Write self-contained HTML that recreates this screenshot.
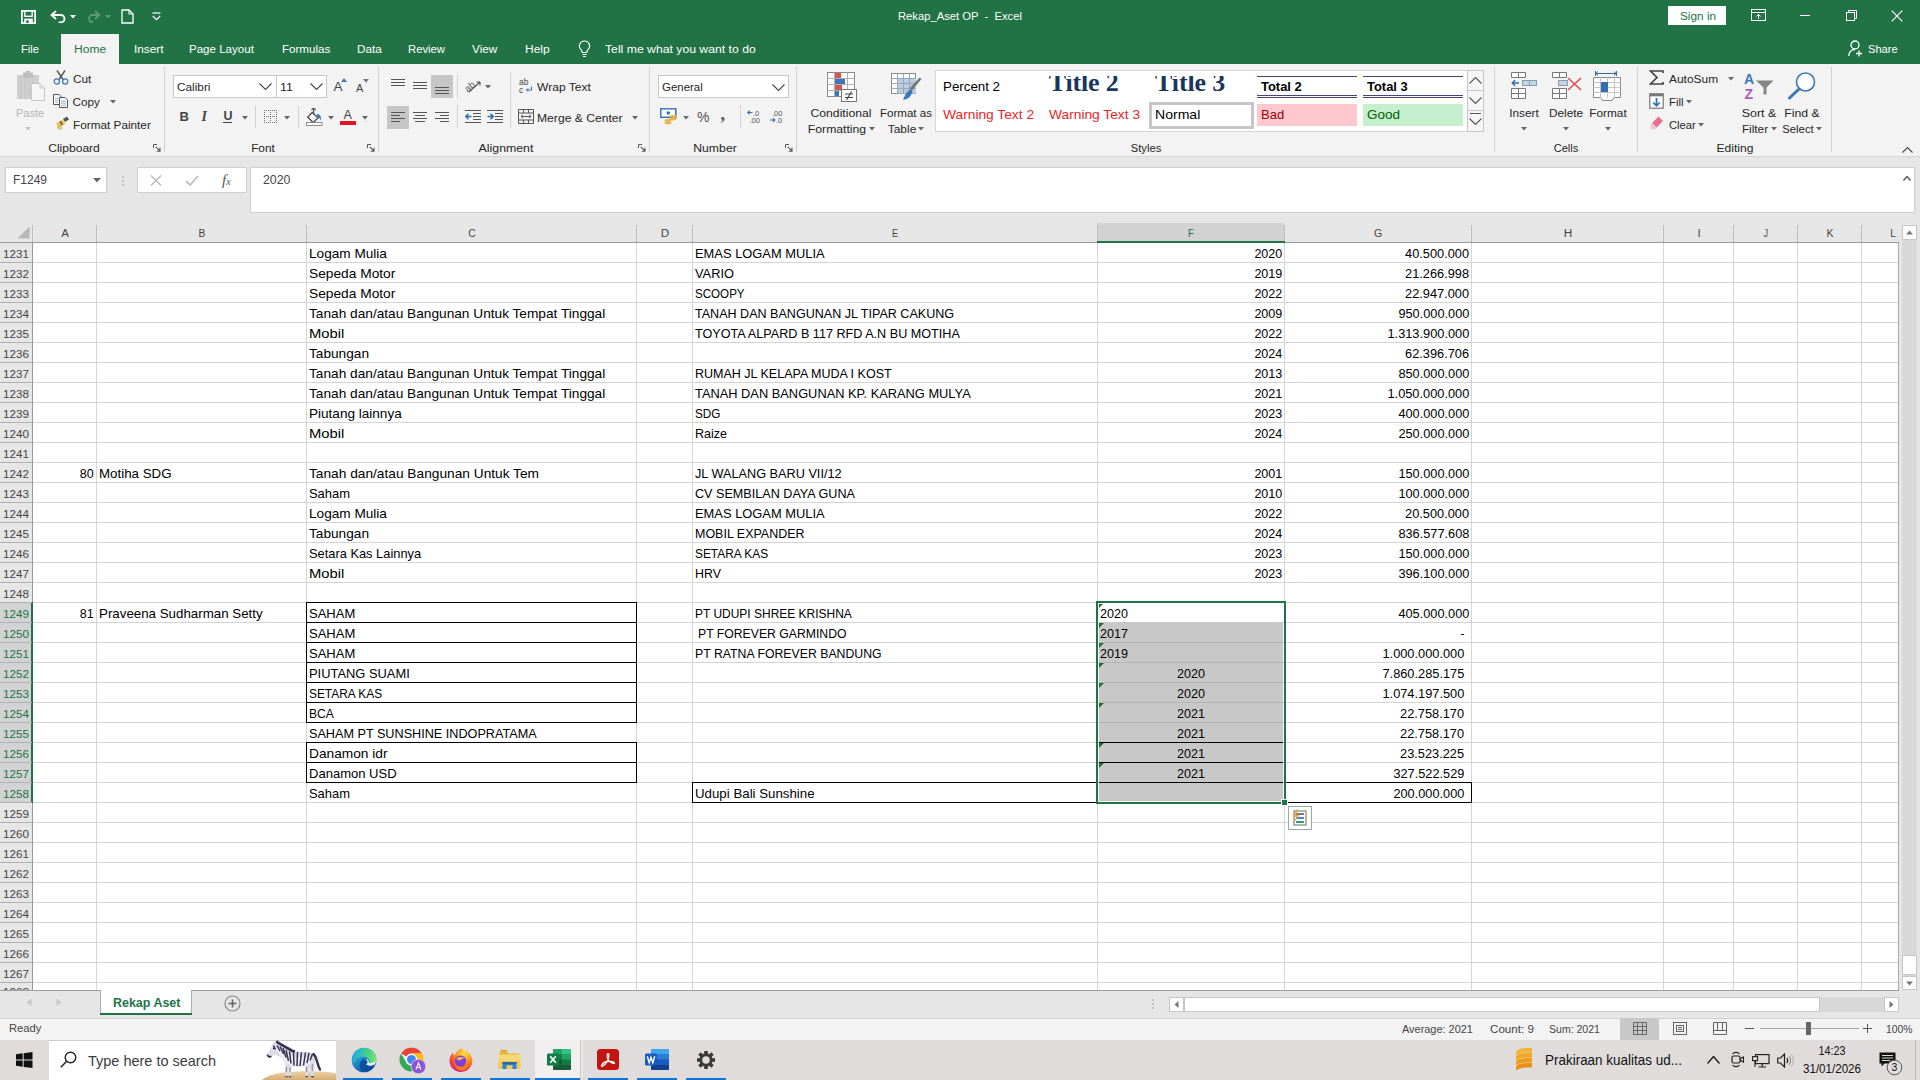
<!DOCTYPE html>
<html><head><meta charset="utf-8"><title>Rekap_Aset OP - Excel</title>
<style>
html,body{margin:0;padding:0;}
body{width:1920px;height:1080px;overflow:hidden;position:relative;background:#fff;font-family:"Liberation Sans",sans-serif;}
body>div,body>span,body>svg{position:absolute;}
.t{white-space:pre;display:block;}
</style></head><body>
<div style="left:0px;top:0px;width:1920px;height:64px;background:#217346;"></div>
<div style="left:0px;top:64px;width:1920px;height:93px;background:#f3f3f3;"></div>
<div style="left:0px;top:156px;width:1920px;height:1px;background:#d6d6d6;"></div>
<div style="left:0px;top:157px;width:1920px;height:66px;background:#e6e6e6;"></div>
<div style="left:0px;top:223px;width:1920px;height:767px;background:#e6e6e6;"></div>
<div style="left:33px;top:243px;width:1866px;height:747px;background:#fff;"></div>
<div style="left:0px;top:990px;width:1920px;height:29px;background:#e6e6e6;"></div>
<div style="left:0px;top:1019px;width:1920px;height:21px;background:#f3f3f3;"></div>
<div style="left:0px;top:1040px;width:1920px;height:40px;background:#e0dcdb;"></div>
<div style="left:1097px;top:223px;width:187px;height:19px;background:#d2d2d2;"></div>
<div style="left:32px;top:225px;width:1px;height:17px;background:#bdbdbd;"></div>
<div style="left:96px;top:225px;width:1px;height:17px;background:#bdbdbd;"></div>
<div style="left:306px;top:225px;width:1px;height:17px;background:#bdbdbd;"></div>
<div style="left:636px;top:225px;width:1px;height:17px;background:#bdbdbd;"></div>
<div style="left:692px;top:225px;width:1px;height:17px;background:#bdbdbd;"></div>
<div style="left:1097px;top:225px;width:1px;height:17px;background:#bdbdbd;"></div>
<div style="left:1284px;top:225px;width:1px;height:17px;background:#bdbdbd;"></div>
<div style="left:1471px;top:225px;width:1px;height:17px;background:#bdbdbd;"></div>
<div style="left:1663px;top:225px;width:1px;height:17px;background:#bdbdbd;"></div>
<div style="left:1733px;top:225px;width:1px;height:17px;background:#bdbdbd;"></div>
<div style="left:1797px;top:225px;width:1px;height:17px;background:#bdbdbd;"></div>
<div style="left:1861px;top:225px;width:1px;height:17px;background:#bdbdbd;"></div>
<div style="left:0px;top:242px;width:1899px;height:1px;background:#9b9b9b;"></div>
<div style="left:1097px;top:241px;width:188px;height:2px;background:#217346;"></div>
<span class="t" style="top:224.9px;font-size:11.7px;line-height:15px;color:#444;font-weight:normal;font-style:normal;left:-435.5px;width:1000px;text-align:center;transform-origin:50% 50%;transform:scaleX(0.992);">A</span>
<span class="t" style="top:224.9px;font-size:11.7px;line-height:15px;color:#444;font-weight:normal;font-style:normal;left:-298.5px;width:1000px;text-align:center;transform-origin:50% 50%;transform:scaleX(0.881);">B</span>
<span class="t" style="top:224.9px;font-size:11.7px;line-height:15px;color:#444;font-weight:normal;font-style:normal;left:-28.5px;width:1000px;text-align:center;transform-origin:50% 50%;transform:scaleX(0.879);">C</span>
<span class="t" style="top:224.9px;font-size:11.7px;line-height:15px;color:#444;font-weight:normal;font-style:normal;left:164.5px;width:1000px;text-align:center;transform-origin:50% 50%;transform:scaleX(0.996);">D</span>
<span class="t" style="top:224.9px;font-size:11.7px;line-height:15px;color:#444;font-weight:normal;font-style:normal;left:395.0px;width:1000px;text-align:center;transform-origin:50% 50%;transform:scaleX(0.778);">E</span>
<span class="t" style="top:224.9px;font-size:11.7px;line-height:15px;color:#217346;font-weight:normal;font-style:normal;left:691.0px;width:1000px;text-align:center;transform-origin:50% 50%;transform:scaleX(0.819);">F</span>
<span class="t" style="top:224.9px;font-size:11.7px;line-height:15px;color:#444;font-weight:normal;font-style:normal;left:878.0px;width:1000px;text-align:center;transform-origin:50% 50%;transform:scaleX(0.905);">G</span>
<span class="t" style="top:224.9px;font-size:11.7px;line-height:15px;color:#444;font-weight:normal;font-style:normal;left:1067.5px;width:1000px;text-align:center;transform-origin:50% 50%;transform:scaleX(1.008);">H</span>
<span class="t" style="top:224.9px;font-size:11.7px;line-height:15px;color:#444;font-weight:normal;font-style:normal;left:1198.5px;width:1000px;text-align:center;transform-origin:50% 50%;transform:scaleX(0.982);">I</span>
<span class="t" style="top:224.9px;font-size:11.7px;line-height:15px;color:#444;font-weight:normal;font-style:normal;left:1265.5px;width:1000px;text-align:center;transform-origin:50% 50%;transform:scaleX(0.732);">J</span>
<span class="t" style="top:224.9px;font-size:11.7px;line-height:15px;color:#444;font-weight:normal;font-style:normal;left:1329.5px;width:1000px;text-align:center;transform-origin:50% 50%;transform:scaleX(0.892);">K</span>
<span class="t" style="top:224.9px;font-size:11.7px;line-height:15px;color:#444;font-weight:normal;font-style:normal;left:1393.0px;width:1000px;text-align:center;transform-origin:50% 50%;transform:scaleX(0.869);">L</span>
<svg style="left:17px;top:226px" width="13" height="13"><path d="M12.5 0.5V12.5H0.5Z" fill="#b7b7b7"/></svg>
<div style="left:0px;top:603px;width:32px;height:200px;background:#d2d2d2;"></div>
<div style="left:32px;top:243px;width:1px;height:747px;background:#9b9b9b;"></div>
<div style="left:31px;top:602px;width:2px;height:201px;background:#217346;"></div>
<div style="left:0px;top:262px;width:32px;height:1px;background:#b1b1b1;"></div>
<div style="left:33px;top:262px;width:1866px;height:1px;background:#d4d4d4;"></div>
<span class="t" style="top:246.0px;font-size:11.7px;line-height:15px;color:#444;font-weight:normal;font-style:normal;left:-484.0px;width:1000px;text-align:center;transform-origin:50% 50%;transform:scaleX(0.994);">1231</span>
<div style="left:0px;top:282px;width:32px;height:1px;background:#b1b1b1;"></div>
<div style="left:33px;top:282px;width:1866px;height:1px;background:#d4d4d4;"></div>
<span class="t" style="top:266.0px;font-size:11.7px;line-height:15px;color:#444;font-weight:normal;font-style:normal;left:-484.0px;width:1000px;text-align:center;transform-origin:50% 50%;transform:scaleX(0.994);">1232</span>
<div style="left:0px;top:302px;width:32px;height:1px;background:#b1b1b1;"></div>
<div style="left:33px;top:302px;width:1866px;height:1px;background:#d4d4d4;"></div>
<span class="t" style="top:286.0px;font-size:11.7px;line-height:15px;color:#444;font-weight:normal;font-style:normal;left:-484.0px;width:1000px;text-align:center;transform-origin:50% 50%;transform:scaleX(0.994);">1233</span>
<div style="left:0px;top:322px;width:32px;height:1px;background:#b1b1b1;"></div>
<div style="left:33px;top:322px;width:1866px;height:1px;background:#d4d4d4;"></div>
<span class="t" style="top:306.0px;font-size:11.7px;line-height:15px;color:#444;font-weight:normal;font-style:normal;left:-484.0px;width:1000px;text-align:center;transform-origin:50% 50%;transform:scaleX(0.994);">1234</span>
<div style="left:0px;top:342px;width:32px;height:1px;background:#b1b1b1;"></div>
<div style="left:33px;top:342px;width:1866px;height:1px;background:#d4d4d4;"></div>
<span class="t" style="top:326.0px;font-size:11.7px;line-height:15px;color:#444;font-weight:normal;font-style:normal;left:-484.0px;width:1000px;text-align:center;transform-origin:50% 50%;transform:scaleX(0.994);">1235</span>
<div style="left:0px;top:362px;width:32px;height:1px;background:#b1b1b1;"></div>
<div style="left:33px;top:362px;width:1866px;height:1px;background:#d4d4d4;"></div>
<span class="t" style="top:346.0px;font-size:11.7px;line-height:15px;color:#444;font-weight:normal;font-style:normal;left:-484.0px;width:1000px;text-align:center;transform-origin:50% 50%;transform:scaleX(0.994);">1236</span>
<div style="left:0px;top:382px;width:32px;height:1px;background:#b1b1b1;"></div>
<div style="left:33px;top:382px;width:1866px;height:1px;background:#d4d4d4;"></div>
<span class="t" style="top:366.0px;font-size:11.7px;line-height:15px;color:#444;font-weight:normal;font-style:normal;left:-484.0px;width:1000px;text-align:center;transform-origin:50% 50%;transform:scaleX(0.994);">1237</span>
<div style="left:0px;top:402px;width:32px;height:1px;background:#b1b1b1;"></div>
<div style="left:33px;top:402px;width:1866px;height:1px;background:#d4d4d4;"></div>
<span class="t" style="top:386.0px;font-size:11.7px;line-height:15px;color:#444;font-weight:normal;font-style:normal;left:-484.0px;width:1000px;text-align:center;transform-origin:50% 50%;transform:scaleX(0.994);">1238</span>
<div style="left:0px;top:422px;width:32px;height:1px;background:#b1b1b1;"></div>
<div style="left:33px;top:422px;width:1866px;height:1px;background:#d4d4d4;"></div>
<span class="t" style="top:406.0px;font-size:11.7px;line-height:15px;color:#444;font-weight:normal;font-style:normal;left:-484.0px;width:1000px;text-align:center;transform-origin:50% 50%;transform:scaleX(0.994);">1239</span>
<div style="left:0px;top:442px;width:32px;height:1px;background:#b1b1b1;"></div>
<div style="left:33px;top:442px;width:1866px;height:1px;background:#d4d4d4;"></div>
<span class="t" style="top:426.0px;font-size:11.7px;line-height:15px;color:#444;font-weight:normal;font-style:normal;left:-484.0px;width:1000px;text-align:center;transform-origin:50% 50%;transform:scaleX(0.994);">1240</span>
<div style="left:0px;top:462px;width:32px;height:1px;background:#b1b1b1;"></div>
<div style="left:33px;top:462px;width:1866px;height:1px;background:#d4d4d4;"></div>
<span class="t" style="top:446.0px;font-size:11.7px;line-height:15px;color:#444;font-weight:normal;font-style:normal;left:-484.0px;width:1000px;text-align:center;transform-origin:50% 50%;transform:scaleX(0.994);">1241</span>
<div style="left:0px;top:482px;width:32px;height:1px;background:#b1b1b1;"></div>
<div style="left:33px;top:482px;width:1866px;height:1px;background:#d4d4d4;"></div>
<span class="t" style="top:466.0px;font-size:11.7px;line-height:15px;color:#444;font-weight:normal;font-style:normal;left:-484.0px;width:1000px;text-align:center;transform-origin:50% 50%;transform:scaleX(0.994);">1242</span>
<div style="left:0px;top:502px;width:32px;height:1px;background:#b1b1b1;"></div>
<div style="left:33px;top:502px;width:1866px;height:1px;background:#d4d4d4;"></div>
<span class="t" style="top:486.0px;font-size:11.7px;line-height:15px;color:#444;font-weight:normal;font-style:normal;left:-484.0px;width:1000px;text-align:center;transform-origin:50% 50%;transform:scaleX(0.994);">1243</span>
<div style="left:0px;top:522px;width:32px;height:1px;background:#b1b1b1;"></div>
<div style="left:33px;top:522px;width:1866px;height:1px;background:#d4d4d4;"></div>
<span class="t" style="top:506.0px;font-size:11.7px;line-height:15px;color:#444;font-weight:normal;font-style:normal;left:-484.0px;width:1000px;text-align:center;transform-origin:50% 50%;transform:scaleX(0.994);">1244</span>
<div style="left:0px;top:542px;width:32px;height:1px;background:#b1b1b1;"></div>
<div style="left:33px;top:542px;width:1866px;height:1px;background:#d4d4d4;"></div>
<span class="t" style="top:526.0px;font-size:11.7px;line-height:15px;color:#444;font-weight:normal;font-style:normal;left:-484.0px;width:1000px;text-align:center;transform-origin:50% 50%;transform:scaleX(0.994);">1245</span>
<div style="left:0px;top:562px;width:32px;height:1px;background:#b1b1b1;"></div>
<div style="left:33px;top:562px;width:1866px;height:1px;background:#d4d4d4;"></div>
<span class="t" style="top:546.0px;font-size:11.7px;line-height:15px;color:#444;font-weight:normal;font-style:normal;left:-484.0px;width:1000px;text-align:center;transform-origin:50% 50%;transform:scaleX(0.994);">1246</span>
<div style="left:0px;top:582px;width:32px;height:1px;background:#b1b1b1;"></div>
<div style="left:33px;top:582px;width:1866px;height:1px;background:#d4d4d4;"></div>
<span class="t" style="top:566.0px;font-size:11.7px;line-height:15px;color:#444;font-weight:normal;font-style:normal;left:-484.0px;width:1000px;text-align:center;transform-origin:50% 50%;transform:scaleX(0.994);">1247</span>
<div style="left:0px;top:602px;width:32px;height:1px;background:#b1b1b1;"></div>
<div style="left:33px;top:602px;width:1866px;height:1px;background:#d4d4d4;"></div>
<span class="t" style="top:586.0px;font-size:11.7px;line-height:15px;color:#444;font-weight:normal;font-style:normal;left:-484.0px;width:1000px;text-align:center;transform-origin:50% 50%;transform:scaleX(0.994);">1248</span>
<div style="left:0px;top:622px;width:32px;height:1px;background:#b1b1b1;"></div>
<div style="left:33px;top:622px;width:1866px;height:1px;background:#d4d4d4;"></div>
<span class="t" style="top:606.0px;font-size:11.7px;line-height:15px;color:#217346;font-weight:normal;font-style:normal;left:-484.0px;width:1000px;text-align:center;transform-origin:50% 50%;transform:scaleX(0.994);">1249</span>
<div style="left:0px;top:642px;width:32px;height:1px;background:#b1b1b1;"></div>
<div style="left:33px;top:642px;width:1866px;height:1px;background:#d4d4d4;"></div>
<span class="t" style="top:626.0px;font-size:11.7px;line-height:15px;color:#217346;font-weight:normal;font-style:normal;left:-484.0px;width:1000px;text-align:center;transform-origin:50% 50%;transform:scaleX(0.994);">1250</span>
<div style="left:0px;top:662px;width:32px;height:1px;background:#b1b1b1;"></div>
<div style="left:33px;top:662px;width:1866px;height:1px;background:#d4d4d4;"></div>
<span class="t" style="top:646.0px;font-size:11.7px;line-height:15px;color:#217346;font-weight:normal;font-style:normal;left:-484.0px;width:1000px;text-align:center;transform-origin:50% 50%;transform:scaleX(0.994);">1251</span>
<div style="left:0px;top:682px;width:32px;height:1px;background:#b1b1b1;"></div>
<div style="left:33px;top:682px;width:1866px;height:1px;background:#d4d4d4;"></div>
<span class="t" style="top:666.0px;font-size:11.7px;line-height:15px;color:#217346;font-weight:normal;font-style:normal;left:-484.0px;width:1000px;text-align:center;transform-origin:50% 50%;transform:scaleX(0.994);">1252</span>
<div style="left:0px;top:702px;width:32px;height:1px;background:#b1b1b1;"></div>
<div style="left:33px;top:702px;width:1866px;height:1px;background:#d4d4d4;"></div>
<span class="t" style="top:686.0px;font-size:11.7px;line-height:15px;color:#217346;font-weight:normal;font-style:normal;left:-484.0px;width:1000px;text-align:center;transform-origin:50% 50%;transform:scaleX(0.994);">1253</span>
<div style="left:0px;top:722px;width:32px;height:1px;background:#b1b1b1;"></div>
<div style="left:33px;top:722px;width:1866px;height:1px;background:#d4d4d4;"></div>
<span class="t" style="top:706.0px;font-size:11.7px;line-height:15px;color:#217346;font-weight:normal;font-style:normal;left:-484.0px;width:1000px;text-align:center;transform-origin:50% 50%;transform:scaleX(0.994);">1254</span>
<div style="left:0px;top:742px;width:32px;height:1px;background:#b1b1b1;"></div>
<div style="left:33px;top:742px;width:1866px;height:1px;background:#d4d4d4;"></div>
<span class="t" style="top:726.0px;font-size:11.7px;line-height:15px;color:#217346;font-weight:normal;font-style:normal;left:-484.0px;width:1000px;text-align:center;transform-origin:50% 50%;transform:scaleX(0.994);">1255</span>
<div style="left:0px;top:762px;width:32px;height:1px;background:#b1b1b1;"></div>
<div style="left:33px;top:762px;width:1866px;height:1px;background:#d4d4d4;"></div>
<span class="t" style="top:746.0px;font-size:11.7px;line-height:15px;color:#217346;font-weight:normal;font-style:normal;left:-484.0px;width:1000px;text-align:center;transform-origin:50% 50%;transform:scaleX(0.994);">1256</span>
<div style="left:0px;top:782px;width:32px;height:1px;background:#b1b1b1;"></div>
<div style="left:33px;top:782px;width:1866px;height:1px;background:#d4d4d4;"></div>
<span class="t" style="top:766.0px;font-size:11.7px;line-height:15px;color:#217346;font-weight:normal;font-style:normal;left:-484.0px;width:1000px;text-align:center;transform-origin:50% 50%;transform:scaleX(0.994);">1257</span>
<div style="left:0px;top:802px;width:32px;height:1px;background:#b1b1b1;"></div>
<div style="left:33px;top:802px;width:1866px;height:1px;background:#d4d4d4;"></div>
<span class="t" style="top:786.0px;font-size:11.7px;line-height:15px;color:#217346;font-weight:normal;font-style:normal;left:-484.0px;width:1000px;text-align:center;transform-origin:50% 50%;transform:scaleX(0.994);">1258</span>
<div style="left:0px;top:822px;width:32px;height:1px;background:#b1b1b1;"></div>
<div style="left:33px;top:822px;width:1866px;height:1px;background:#d4d4d4;"></div>
<span class="t" style="top:806.0px;font-size:11.7px;line-height:15px;color:#444;font-weight:normal;font-style:normal;left:-484.0px;width:1000px;text-align:center;transform-origin:50% 50%;transform:scaleX(0.994);">1259</span>
<div style="left:0px;top:842px;width:32px;height:1px;background:#b1b1b1;"></div>
<div style="left:33px;top:842px;width:1866px;height:1px;background:#d4d4d4;"></div>
<span class="t" style="top:826.0px;font-size:11.7px;line-height:15px;color:#444;font-weight:normal;font-style:normal;left:-484.0px;width:1000px;text-align:center;transform-origin:50% 50%;transform:scaleX(0.994);">1260</span>
<div style="left:0px;top:862px;width:32px;height:1px;background:#b1b1b1;"></div>
<div style="left:33px;top:862px;width:1866px;height:1px;background:#d4d4d4;"></div>
<span class="t" style="top:846.0px;font-size:11.7px;line-height:15px;color:#444;font-weight:normal;font-style:normal;left:-484.0px;width:1000px;text-align:center;transform-origin:50% 50%;transform:scaleX(0.994);">1261</span>
<div style="left:0px;top:882px;width:32px;height:1px;background:#b1b1b1;"></div>
<div style="left:33px;top:882px;width:1866px;height:1px;background:#d4d4d4;"></div>
<span class="t" style="top:866.0px;font-size:11.7px;line-height:15px;color:#444;font-weight:normal;font-style:normal;left:-484.0px;width:1000px;text-align:center;transform-origin:50% 50%;transform:scaleX(0.994);">1262</span>
<div style="left:0px;top:902px;width:32px;height:1px;background:#b1b1b1;"></div>
<div style="left:33px;top:902px;width:1866px;height:1px;background:#d4d4d4;"></div>
<span class="t" style="top:886.0px;font-size:11.7px;line-height:15px;color:#444;font-weight:normal;font-style:normal;left:-484.0px;width:1000px;text-align:center;transform-origin:50% 50%;transform:scaleX(0.994);">1263</span>
<div style="left:0px;top:922px;width:32px;height:1px;background:#b1b1b1;"></div>
<div style="left:33px;top:922px;width:1866px;height:1px;background:#d4d4d4;"></div>
<span class="t" style="top:906.0px;font-size:11.7px;line-height:15px;color:#444;font-weight:normal;font-style:normal;left:-484.0px;width:1000px;text-align:center;transform-origin:50% 50%;transform:scaleX(0.994);">1264</span>
<div style="left:0px;top:942px;width:32px;height:1px;background:#b1b1b1;"></div>
<div style="left:33px;top:942px;width:1866px;height:1px;background:#d4d4d4;"></div>
<span class="t" style="top:926.0px;font-size:11.7px;line-height:15px;color:#444;font-weight:normal;font-style:normal;left:-484.0px;width:1000px;text-align:center;transform-origin:50% 50%;transform:scaleX(0.994);">1265</span>
<div style="left:0px;top:962px;width:32px;height:1px;background:#b1b1b1;"></div>
<div style="left:33px;top:962px;width:1866px;height:1px;background:#d4d4d4;"></div>
<span class="t" style="top:946.0px;font-size:11.7px;line-height:15px;color:#444;font-weight:normal;font-style:normal;left:-484.0px;width:1000px;text-align:center;transform-origin:50% 50%;transform:scaleX(0.994);">1266</span>
<div style="left:0px;top:982px;width:32px;height:1px;background:#b1b1b1;"></div>
<div style="left:33px;top:982px;width:1866px;height:1px;background:#d4d4d4;"></div>
<span class="t" style="top:966.0px;font-size:11.7px;line-height:15px;color:#444;font-weight:normal;font-style:normal;left:-484.0px;width:1000px;text-align:center;transform-origin:50% 50%;transform:scaleX(0.994);">1267</span>
<div style="left:0;top:983px;width:32px;height:7px;overflow:hidden"><span class="t" style="position:absolute;left:3px;top:1px;font-size:11.7px;line-height:15px;color:#444">1268</span></div>
<div style="left:96px;top:243px;width:1px;height:747px;background:#d4d4d4;"></div>
<div style="left:306px;top:243px;width:1px;height:747px;background:#d4d4d4;"></div>
<div style="left:636px;top:243px;width:1px;height:747px;background:#d4d4d4;"></div>
<div style="left:692px;top:243px;width:1px;height:747px;background:#d4d4d4;"></div>
<div style="left:1097px;top:243px;width:1px;height:747px;background:#d4d4d4;"></div>
<div style="left:1284px;top:243px;width:1px;height:747px;background:#d4d4d4;"></div>
<div style="left:1471px;top:243px;width:1px;height:747px;background:#d4d4d4;"></div>
<div style="left:1663px;top:243px;width:1px;height:747px;background:#d4d4d4;"></div>
<div style="left:1733px;top:243px;width:1px;height:747px;background:#d4d4d4;"></div>
<div style="left:1797px;top:243px;width:1px;height:747px;background:#d4d4d4;"></div>
<div style="left:1861px;top:243px;width:1px;height:747px;background:#d4d4d4;"></div>
<div style="left:1898px;top:243px;width:1px;height:747px;background:#ababab;"></div>
<div style="left:0px;top:990px;width:1899px;height:1px;background:#9b9b9b;"></div>
<span class="t" style="top:245.0px;font-size:13.2px;line-height:17px;color:#000;font-weight:normal;font-style:normal;left:309.0px;transform-origin:0 50%;transform:scaleX(1.032);">Logam Mulia</span>
<span class="t" style="top:245.0px;font-size:13.2px;line-height:17px;color:#000;font-weight:normal;font-style:normal;left:695.0px;transform-origin:0 50%;transform:scaleX(0.978);">EMAS LOGAM MULIA</span>
<span class="t" style="top:245.0px;font-size:13.2px;line-height:17px;color:#000;font-weight:normal;font-style:normal;right:638.0px;transform-origin:100% 50%;transform:scaleX(0.953);">2020</span>
<span class="t" style="top:245.0px;font-size:13.2px;line-height:17px;color:#000;font-weight:normal;font-style:normal;right:451.0px;transform-origin:100% 50%;transform:scaleX(0.969);">40.500.000</span>
<span class="t" style="top:265.0px;font-size:13.2px;line-height:17px;color:#000;font-weight:normal;font-style:normal;left:309.0px;transform-origin:0 50%;transform:scaleX(1.042);">Sepeda Motor</span>
<span class="t" style="top:265.0px;font-size:13.2px;line-height:17px;color:#000;font-weight:normal;font-style:normal;left:695.0px;transform-origin:0 50%;transform:scaleX(0.971);">VARIO</span>
<span class="t" style="top:265.0px;font-size:13.2px;line-height:17px;color:#000;font-weight:normal;font-style:normal;right:638.0px;transform-origin:100% 50%;transform:scaleX(0.953);">2019</span>
<span class="t" style="top:265.0px;font-size:13.2px;line-height:17px;color:#000;font-weight:normal;font-style:normal;right:451.0px;transform-origin:100% 50%;transform:scaleX(0.969);">21.266.998</span>
<span class="t" style="top:285.0px;font-size:13.2px;line-height:17px;color:#000;font-weight:normal;font-style:normal;left:309.0px;transform-origin:0 50%;transform:scaleX(1.042);">Sepeda Motor</span>
<span class="t" style="top:285.0px;font-size:13.2px;line-height:17px;color:#000;font-weight:normal;font-style:normal;left:695.0px;transform-origin:0 50%;transform:scaleX(0.879);">SCOOPY</span>
<span class="t" style="top:285.0px;font-size:13.2px;line-height:17px;color:#000;font-weight:normal;font-style:normal;right:638.0px;transform-origin:100% 50%;transform:scaleX(0.953);">2022</span>
<span class="t" style="top:285.0px;font-size:13.2px;line-height:17px;color:#000;font-weight:normal;font-style:normal;right:451.0px;transform-origin:100% 50%;transform:scaleX(0.969);">22.947.000</span>
<span class="t" style="top:305.0px;font-size:13.2px;line-height:17px;color:#000;font-weight:normal;font-style:normal;left:309.0px;transform-origin:0 50%;transform:scaleX(1.037);">Tanah dan/atau Bangunan Untuk Tempat Tinggal</span>
<span class="t" style="top:305.0px;font-size:13.2px;line-height:17px;color:#000;font-weight:normal;font-style:normal;left:695.0px;transform-origin:0 50%;transform:scaleX(0.952);">TANAH DAN BANGUNAN JL TIPAR CAKUNG</span>
<span class="t" style="top:305.0px;font-size:13.2px;line-height:17px;color:#000;font-weight:normal;font-style:normal;right:638.0px;transform-origin:100% 50%;transform:scaleX(0.953);">2009</span>
<span class="t" style="top:305.0px;font-size:13.2px;line-height:17px;color:#000;font-weight:normal;font-style:normal;right:451.0px;transform-origin:100% 50%;transform:scaleX(0.967);">950.000.000</span>
<span class="t" style="top:325.0px;font-size:13.2px;line-height:17px;color:#000;font-weight:normal;font-style:normal;left:309.0px;transform-origin:0 50%;transform:scaleX(1.122);">Mobil</span>
<span class="t" style="top:325.0px;font-size:13.2px;line-height:17px;color:#000;font-weight:normal;font-style:normal;left:695.0px;transform-origin:0 50%;transform:scaleX(0.957);">TOYOTA ALPARD B 117 RFD A.N BU MOTIHA</span>
<span class="t" style="top:325.0px;font-size:13.2px;line-height:17px;color:#000;font-weight:normal;font-style:normal;right:638.0px;transform-origin:100% 50%;transform:scaleX(0.953);">2022</span>
<span class="t" style="top:325.0px;font-size:13.2px;line-height:17px;color:#000;font-weight:normal;font-style:normal;right:451.0px;transform-origin:100% 50%;transform:scaleX(0.971);">1.313.900.000</span>
<span class="t" style="top:345.0px;font-size:13.2px;line-height:17px;color:#000;font-weight:normal;font-style:normal;left:309.0px;transform-origin:0 50%;transform:scaleX(1.036);">Tabungan</span>
<span class="t" style="top:345.0px;font-size:13.2px;line-height:17px;color:#000;font-weight:normal;font-style:normal;right:638.0px;transform-origin:100% 50%;transform:scaleX(0.953);">2024</span>
<span class="t" style="top:345.0px;font-size:13.2px;line-height:17px;color:#000;font-weight:normal;font-style:normal;right:451.0px;transform-origin:100% 50%;transform:scaleX(0.969);">62.396.706</span>
<span class="t" style="top:365.0px;font-size:13.2px;line-height:17px;color:#000;font-weight:normal;font-style:normal;left:309.0px;transform-origin:0 50%;transform:scaleX(1.037);">Tanah dan/atau Bangunan Untuk Tempat Tinggal</span>
<span class="t" style="top:365.0px;font-size:13.2px;line-height:17px;color:#000;font-weight:normal;font-style:normal;left:695.0px;transform-origin:0 50%;transform:scaleX(0.948);">RUMAH JL KELAPA MUDA I KOST</span>
<span class="t" style="top:365.0px;font-size:13.2px;line-height:17px;color:#000;font-weight:normal;font-style:normal;right:638.0px;transform-origin:100% 50%;transform:scaleX(0.953);">2013</span>
<span class="t" style="top:365.0px;font-size:13.2px;line-height:17px;color:#000;font-weight:normal;font-style:normal;right:451.0px;transform-origin:100% 50%;transform:scaleX(0.967);">850.000.000</span>
<span class="t" style="top:385.0px;font-size:13.2px;line-height:17px;color:#000;font-weight:normal;font-style:normal;left:309.0px;transform-origin:0 50%;transform:scaleX(1.037);">Tanah dan/atau Bangunan Untuk Tempat Tinggal</span>
<span class="t" style="top:385.0px;font-size:13.2px;line-height:17px;color:#000;font-weight:normal;font-style:normal;left:695.0px;transform-origin:0 50%;transform:scaleX(0.973);">TANAH DAN BANGUNAN KP. KARANG MULYA</span>
<span class="t" style="top:385.0px;font-size:13.2px;line-height:17px;color:#000;font-weight:normal;font-style:normal;right:638.0px;transform-origin:100% 50%;transform:scaleX(0.953);">2021</span>
<span class="t" style="top:385.0px;font-size:13.2px;line-height:17px;color:#000;font-weight:normal;font-style:normal;right:451.0px;transform-origin:100% 50%;transform:scaleX(0.971);">1.050.000.000</span>
<span class="t" style="top:405.0px;font-size:13.2px;line-height:17px;color:#000;font-weight:normal;font-style:normal;left:309.0px;transform-origin:0 50%;transform:scaleX(1.028);">Piutang lainnya</span>
<span class="t" style="top:405.0px;font-size:13.2px;line-height:17px;color:#000;font-weight:normal;font-style:normal;left:695.0px;transform-origin:0 50%;transform:scaleX(0.892);">SDG</span>
<span class="t" style="top:405.0px;font-size:13.2px;line-height:17px;color:#000;font-weight:normal;font-style:normal;right:638.0px;transform-origin:100% 50%;transform:scaleX(0.953);">2023</span>
<span class="t" style="top:405.0px;font-size:13.2px;line-height:17px;color:#000;font-weight:normal;font-style:normal;right:451.0px;transform-origin:100% 50%;transform:scaleX(0.967);">400.000.000</span>
<span class="t" style="top:425.0px;font-size:13.2px;line-height:17px;color:#000;font-weight:normal;font-style:normal;left:309.0px;transform-origin:0 50%;transform:scaleX(1.122);">Mobil</span>
<span class="t" style="top:425.0px;font-size:13.2px;line-height:17px;color:#000;font-weight:normal;font-style:normal;left:695.0px;transform-origin:0 50%;transform:scaleX(0.950);">Raize</span>
<span class="t" style="top:425.0px;font-size:13.2px;line-height:17px;color:#000;font-weight:normal;font-style:normal;right:638.0px;transform-origin:100% 50%;transform:scaleX(0.953);">2024</span>
<span class="t" style="top:425.0px;font-size:13.2px;line-height:17px;color:#000;font-weight:normal;font-style:normal;right:451.0px;transform-origin:100% 50%;transform:scaleX(0.967);">250.000.000</span>
<span class="t" style="top:465.0px;font-size:13.2px;line-height:17px;color:#000;font-weight:normal;font-style:normal;right:1826.0px;transform-origin:100% 50%;transform:scaleX(0.953);">80</span>
<span class="t" style="top:465.0px;font-size:13.2px;line-height:17px;color:#000;font-weight:normal;font-style:normal;left:99.0px;transform-origin:0 50%;transform:scaleX(1.010);">Motiha SDG</span>
<span class="t" style="top:465.0px;font-size:13.2px;line-height:17px;color:#000;font-weight:normal;font-style:normal;left:309.0px;transform-origin:0 50%;transform:scaleX(1.040);">Tanah dan/atau Bangunan Untuk Tem</span>
<span class="t" style="top:465.0px;font-size:13.2px;line-height:17px;color:#000;font-weight:normal;font-style:normal;left:695.0px;transform-origin:0 50%;transform:scaleX(0.963);">JL WALANG BARU VII/12</span>
<span class="t" style="top:465.0px;font-size:13.2px;line-height:17px;color:#000;font-weight:normal;font-style:normal;right:638.0px;transform-origin:100% 50%;transform:scaleX(0.953);">2001</span>
<span class="t" style="top:465.0px;font-size:13.2px;line-height:17px;color:#000;font-weight:normal;font-style:normal;right:451.0px;transform-origin:100% 50%;transform:scaleX(0.967);">150.000.000</span>
<span class="t" style="top:485.0px;font-size:13.2px;line-height:17px;color:#000;font-weight:normal;font-style:normal;left:309.0px;transform-origin:0 50%;transform:scaleX(0.980);">Saham</span>
<span class="t" style="top:485.0px;font-size:13.2px;line-height:17px;color:#000;font-weight:normal;font-style:normal;left:695.0px;transform-origin:0 50%;transform:scaleX(0.956);">CV SEMBILAN DAYA GUNA</span>
<span class="t" style="top:485.0px;font-size:13.2px;line-height:17px;color:#000;font-weight:normal;font-style:normal;right:638.0px;transform-origin:100% 50%;transform:scaleX(0.953);">2010</span>
<span class="t" style="top:485.0px;font-size:13.2px;line-height:17px;color:#000;font-weight:normal;font-style:normal;right:451.0px;transform-origin:100% 50%;transform:scaleX(0.967);">100.000.000</span>
<span class="t" style="top:505.0px;font-size:13.2px;line-height:17px;color:#000;font-weight:normal;font-style:normal;left:309.0px;transform-origin:0 50%;transform:scaleX(1.032);">Logam Mulia</span>
<span class="t" style="top:505.0px;font-size:13.2px;line-height:17px;color:#000;font-weight:normal;font-style:normal;left:695.0px;transform-origin:0 50%;transform:scaleX(0.978);">EMAS LOGAM MULIA</span>
<span class="t" style="top:505.0px;font-size:13.2px;line-height:17px;color:#000;font-weight:normal;font-style:normal;right:638.0px;transform-origin:100% 50%;transform:scaleX(0.953);">2022</span>
<span class="t" style="top:505.0px;font-size:13.2px;line-height:17px;color:#000;font-weight:normal;font-style:normal;right:451.0px;transform-origin:100% 50%;transform:scaleX(0.969);">20.500.000</span>
<span class="t" style="top:525.0px;font-size:13.2px;line-height:17px;color:#000;font-weight:normal;font-style:normal;left:309.0px;transform-origin:0 50%;transform:scaleX(1.036);">Tabungan</span>
<span class="t" style="top:525.0px;font-size:13.2px;line-height:17px;color:#000;font-weight:normal;font-style:normal;left:695.0px;transform-origin:0 50%;transform:scaleX(0.946);">MOBIL EXPANDER</span>
<span class="t" style="top:525.0px;font-size:13.2px;line-height:17px;color:#000;font-weight:normal;font-style:normal;right:638.0px;transform-origin:100% 50%;transform:scaleX(0.953);">2024</span>
<span class="t" style="top:525.0px;font-size:13.2px;line-height:17px;color:#000;font-weight:normal;font-style:normal;right:451.0px;transform-origin:100% 50%;transform:scaleX(0.967);">836.577.608</span>
<span class="t" style="top:545.0px;font-size:13.2px;line-height:17px;color:#000;font-weight:normal;font-style:normal;left:309.0px;transform-origin:0 50%;transform:scaleX(0.974);">Setara Kas Lainnya</span>
<span class="t" style="top:545.0px;font-size:13.2px;line-height:17px;color:#000;font-weight:normal;font-style:normal;left:695.0px;transform-origin:0 50%;transform:scaleX(0.902);">SETARA KAS</span>
<span class="t" style="top:545.0px;font-size:13.2px;line-height:17px;color:#000;font-weight:normal;font-style:normal;right:638.0px;transform-origin:100% 50%;transform:scaleX(0.953);">2023</span>
<span class="t" style="top:545.0px;font-size:13.2px;line-height:17px;color:#000;font-weight:normal;font-style:normal;right:451.0px;transform-origin:100% 50%;transform:scaleX(0.967);">150.000.000</span>
<span class="t" style="top:565.0px;font-size:13.2px;line-height:17px;color:#000;font-weight:normal;font-style:normal;left:309.0px;transform-origin:0 50%;transform:scaleX(1.122);">Mobil</span>
<span class="t" style="top:565.0px;font-size:13.2px;line-height:17px;color:#000;font-weight:normal;font-style:normal;left:695.0px;transform-origin:0 50%;transform:scaleX(0.938);">HRV</span>
<span class="t" style="top:565.0px;font-size:13.2px;line-height:17px;color:#000;font-weight:normal;font-style:normal;right:638.0px;transform-origin:100% 50%;transform:scaleX(0.953);">2023</span>
<span class="t" style="top:565.0px;font-size:13.2px;line-height:17px;color:#000;font-weight:normal;font-style:normal;right:451.0px;transform-origin:100% 50%;transform:scaleX(0.967);">396.100.000</span>
<div style="left:1099px;top:622px;width:184px;height:179px;background:#c8c8c8;"></div>
<div style="left:1099px;top:642px;width:184px;height:1px;background:#b4b4b4;"></div>
<div style="left:1099px;top:662px;width:184px;height:1px;background:#b4b4b4;"></div>
<div style="left:1099px;top:682px;width:184px;height:1px;background:#b4b4b4;"></div>
<div style="left:1099px;top:702px;width:184px;height:1px;background:#b4b4b4;"></div>
<div style="left:1099px;top:722px;width:184px;height:1px;background:#b4b4b4;"></div>
<div style="left:1099px;top:742px;width:184px;height:1px;background:#b4b4b4;"></div>
<div style="left:1099px;top:762px;width:184px;height:1px;background:#b4b4b4;"></div>
<div style="left:1099px;top:782px;width:184px;height:1px;background:#b4b4b4;"></div>
<span class="t" style="top:605.0px;font-size:13.2px;line-height:17px;color:#000;font-weight:normal;font-style:normal;right:1826.0px;transform-origin:100% 50%;transform:scaleX(0.953);">81</span>
<span class="t" style="top:605.0px;font-size:13.2px;line-height:17px;color:#000;font-weight:normal;font-style:normal;left:99.0px;transform-origin:0 50%;transform:scaleX(1.010);">Praveena Sudharman Setty</span>
<span class="t" style="top:605.0px;font-size:13.2px;line-height:17px;color:#000;font-weight:normal;font-style:normal;left:309.0px;transform-origin:0 50%;transform:scaleX(0.986);">SAHAM</span>
<span class="t" style="top:605.0px;font-size:13.2px;line-height:17px;color:#000;font-weight:normal;font-style:normal;left:695.0px;transform-origin:0 50%;transform:scaleX(0.908);">PT UDUPI SHREE KRISHNA</span>
<span class="t" style="top:605.0px;font-size:13.2px;line-height:17px;color:#000;font-weight:normal;font-style:normal;left:1100.0px;transform-origin:0 50%;transform:scaleX(0.953);">2020</span>
<span class="t" style="top:605.0px;font-size:13.2px;line-height:17px;color:#000;font-weight:normal;font-style:normal;right:451.0px;transform-origin:100% 50%;transform:scaleX(0.967);">405.000.000</span>
<span class="t" style="top:625.0px;font-size:13.2px;line-height:17px;color:#000;font-weight:normal;font-style:normal;left:309.0px;transform-origin:0 50%;transform:scaleX(0.986);">SAHAM</span>
<span class="t" style="top:625.0px;font-size:13.2px;line-height:17px;color:#000;font-weight:normal;font-style:normal;left:698.0px;transform-origin:0 50%;transform:scaleX(0.927);">PT FOREVER GARMINDO</span>
<span class="t" style="top:625.0px;font-size:13.2px;line-height:17px;color:#000;font-weight:normal;font-style:normal;left:1100.0px;transform-origin:0 50%;transform:scaleX(0.953);">2017</span>
<span class="t" style="top:625.0px;font-size:13.2px;line-height:17px;color:#000;font-weight:normal;font-style:normal;right:456.0px;transform-origin:100% 50%;transform:scaleX(0.910);">-</span>
<span class="t" style="top:645.0px;font-size:13.2px;line-height:17px;color:#000;font-weight:normal;font-style:normal;left:309.0px;transform-origin:0 50%;transform:scaleX(0.986);">SAHAM</span>
<span class="t" style="top:645.0px;font-size:13.2px;line-height:17px;color:#000;font-weight:normal;font-style:normal;left:695.0px;transform-origin:0 50%;transform:scaleX(0.932);">PT RATNA FOREVER BANDUNG</span>
<span class="t" style="top:645.0px;font-size:13.2px;line-height:17px;color:#000;font-weight:normal;font-style:normal;left:1100.0px;transform-origin:0 50%;transform:scaleX(0.953);">2019</span>
<span class="t" style="top:645.0px;font-size:13.2px;line-height:17px;color:#000;font-weight:normal;font-style:normal;right:456.0px;transform-origin:100% 50%;transform:scaleX(0.971);">1.000.000.000</span>
<span class="t" style="top:665.0px;font-size:13.2px;line-height:17px;color:#000;font-weight:normal;font-style:normal;left:309.0px;transform-origin:0 50%;transform:scaleX(0.978);">PIUTANG SUAMI</span>
<span class="t" style="top:665.0px;font-size:13.2px;line-height:17px;color:#000;font-weight:normal;font-style:normal;left:690.5px;width:1000px;text-align:center;transform-origin:50% 50%;transform:scaleX(0.953);">2020</span>
<span class="t" style="top:665.0px;font-size:13.2px;line-height:17px;color:#000;font-weight:normal;font-style:normal;right:456.0px;transform-origin:100% 50%;transform:scaleX(0.971);">7.860.285.175</span>
<span class="t" style="top:685.0px;font-size:13.2px;line-height:17px;color:#000;font-weight:normal;font-style:normal;left:309.0px;transform-origin:0 50%;transform:scaleX(0.902);">SETARA KAS</span>
<span class="t" style="top:685.0px;font-size:13.2px;line-height:17px;color:#000;font-weight:normal;font-style:normal;left:690.5px;width:1000px;text-align:center;transform-origin:50% 50%;transform:scaleX(0.953);">2020</span>
<span class="t" style="top:685.0px;font-size:13.2px;line-height:17px;color:#000;font-weight:normal;font-style:normal;right:456.0px;transform-origin:100% 50%;transform:scaleX(0.971);">1.074.197.500</span>
<span class="t" style="top:705.0px;font-size:13.2px;line-height:17px;color:#000;font-weight:normal;font-style:normal;left:309.0px;transform-origin:0 50%;transform:scaleX(0.913);">BCA</span>
<span class="t" style="top:705.0px;font-size:13.2px;line-height:17px;color:#000;font-weight:normal;font-style:normal;left:690.5px;width:1000px;text-align:center;transform-origin:50% 50%;transform:scaleX(0.953);">2021</span>
<span class="t" style="top:705.0px;font-size:13.2px;line-height:17px;color:#000;font-weight:normal;font-style:normal;right:456.0px;transform-origin:100% 50%;transform:scaleX(0.969);">22.758.170</span>
<span class="t" style="top:725.0px;font-size:13.2px;line-height:17px;color:#000;font-weight:normal;font-style:normal;left:309.0px;transform-origin:0 50%;transform:scaleX(0.959);">SAHAM PT SUNSHINE INDOPRATAMA</span>
<span class="t" style="top:725.0px;font-size:13.2px;line-height:17px;color:#000;font-weight:normal;font-style:normal;left:690.5px;width:1000px;text-align:center;transform-origin:50% 50%;transform:scaleX(0.953);">2021</span>
<span class="t" style="top:725.0px;font-size:13.2px;line-height:17px;color:#000;font-weight:normal;font-style:normal;right:456.0px;transform-origin:100% 50%;transform:scaleX(0.969);">22.758.170</span>
<span class="t" style="top:745.0px;font-size:13.2px;line-height:17px;color:#000;font-weight:normal;font-style:normal;left:309.0px;transform-origin:0 50%;transform:scaleX(1.040);">Danamon idr</span>
<span class="t" style="top:745.0px;font-size:13.2px;line-height:17px;color:#000;font-weight:normal;font-style:normal;left:690.5px;width:1000px;text-align:center;transform-origin:50% 50%;transform:scaleX(0.953);">2021</span>
<span class="t" style="top:745.0px;font-size:13.2px;line-height:17px;color:#000;font-weight:normal;font-style:normal;right:456.0px;transform-origin:100% 50%;transform:scaleX(0.969);">23.523.225</span>
<span class="t" style="top:765.0px;font-size:13.2px;line-height:17px;color:#000;font-weight:normal;font-style:normal;left:309.0px;transform-origin:0 50%;transform:scaleX(0.988);">Danamon USD</span>
<span class="t" style="top:765.0px;font-size:13.2px;line-height:17px;color:#000;font-weight:normal;font-style:normal;left:690.5px;width:1000px;text-align:center;transform-origin:50% 50%;transform:scaleX(0.953);">2021</span>
<span class="t" style="top:765.0px;font-size:13.2px;line-height:17px;color:#000;font-weight:normal;font-style:normal;right:456.0px;transform-origin:100% 50%;transform:scaleX(0.967);">327.522.529</span>
<span class="t" style="top:785.0px;font-size:13.2px;line-height:17px;color:#000;font-weight:normal;font-style:normal;left:309.0px;transform-origin:0 50%;transform:scaleX(0.980);">Saham</span>
<span class="t" style="top:785.0px;font-size:13.2px;line-height:17px;color:#000;font-weight:normal;font-style:normal;left:695.0px;transform-origin:0 50%;transform:scaleX(1.007);">Udupi Bali Sunshine</span>
<span class="t" style="top:785.0px;font-size:13.2px;line-height:17px;color:#000;font-weight:normal;font-style:normal;right:456.0px;transform-origin:100% 50%;transform:scaleX(0.967);">200.000.000</span>
<div style="left:306px;top:602px;width:331px;height:1px;background:#000;"></div>
<div style="left:306px;top:622px;width:331px;height:1px;background:#000;"></div>
<div style="left:306px;top:642px;width:331px;height:1px;background:#000;"></div>
<div style="left:306px;top:662px;width:331px;height:1px;background:#000;"></div>
<div style="left:306px;top:682px;width:331px;height:1px;background:#000;"></div>
<div style="left:306px;top:702px;width:331px;height:1px;background:#000;"></div>
<div style="left:306px;top:722px;width:331px;height:1px;background:#000;"></div>
<div style="left:306px;top:602px;width:1px;height:121px;background:#000;"></div>
<div style="left:636px;top:602px;width:1px;height:121px;background:#000;"></div>
<div style="left:306px;top:742px;width:331px;height:1px;background:#000;"></div>
<div style="left:306px;top:762px;width:331px;height:1px;background:#000;"></div>
<div style="left:306px;top:782px;width:331px;height:1px;background:#000;"></div>
<div style="left:306px;top:742px;width:1px;height:41px;background:#000;"></div>
<div style="left:636px;top:742px;width:1px;height:41px;background:#000;"></div>
<div style="left:692px;top:782px;width:405px;height:1px;background:#000;"></div>
<div style="left:692px;top:802px;width:405px;height:1px;background:#000;"></div>
<div style="left:692px;top:782px;width:1px;height:21px;background:#000;"></div>
<div style="left:1285px;top:782px;width:187px;height:1px;background:#000;"></div>
<div style="left:1285px;top:802px;width:187px;height:1px;background:#000;"></div>
<div style="left:1471px;top:782px;width:1px;height:21px;background:#000;"></div>
<div style="left:1099px;top:742px;width:184px;height:1px;background:#000;"></div>
<div style="left:1099px;top:762px;width:184px;height:1px;background:#000;"></div>
<div style="left:1099px;top:782px;width:184px;height:1px;background:#000;"></div>
<svg style="left:1099px;top:604px" width="4" height="4"><path d="M0 0H4L0 4Z" fill="#1e6b3c"/></svg>
<svg style="left:1099px;top:623px" width="5" height="5"><path d="M0 0H5L0 5Z" fill="#1e6b3c"/></svg>
<svg style="left:1099px;top:643px" width="5" height="5"><path d="M0 0H5L0 5Z" fill="#1e6b3c"/></svg>
<svg style="left:1099px;top:663px" width="5" height="5"><path d="M0 0H5L0 5Z" fill="#1e6b3c"/></svg>
<svg style="left:1099px;top:683px" width="5" height="5"><path d="M0 0H5L0 5Z" fill="#1e6b3c"/></svg>
<svg style="left:1099px;top:703px" width="5" height="5"><path d="M0 0H5L0 5Z" fill="#1e6b3c"/></svg>
<svg style="left:1099px;top:743px" width="5" height="5"><path d="M0 0H5L0 5Z" fill="#1e6b3c"/></svg>
<svg style="left:1099px;top:763px" width="5" height="5"><path d="M0 0H5L0 5Z" fill="#1e6b3c"/></svg>
<div style="left:1096px;top:601px;width:190px;height:2px;background:#217346;"></div>
<div style="left:1096px;top:802px;width:187px;height:2px;background:#217346;"></div>
<div style="left:1096px;top:601px;width:2px;height:203px;background:#217346;"></div>
<div style="left:1284px;top:601px;width:2px;height:199px;background:#217346;"></div>
<div style="left:1281px;top:799px;width:7px;height:7px;background:#fff;"></div>
<div style="left:1282px;top:800px;width:5px;height:5px;background:#217346;"></div>
<svg style="left:1288px;top:806px" width="24" height="24" viewBox="0 0 24 24">
<rect x="0.5" y="0.5" width="23" height="23" fill="#fff" stroke="#8fb39f"/>
<rect x="6" y="5" width="12" height="14" fill="#fff" stroke="#6b6b6b"/>
<rect x="8" y="7" width="8" height="2" fill="#7a7a7a"/>
<rect x="8" y="11" width="8" height="2" fill="#4a86c5"/>
<rect x="8" y="15" width="8" height="2" fill="#3b9b6a"/>
<path d="M9 3L5 11H8L6 17L11 9H8L10 3Z" fill="#f0a33a"/></svg>
<svg style="left:21px;top:10px" width="15" height="14" viewBox="0 0 15 14"><path d="M0.9 0.9H14.1V13.1H0.9Z" fill="none" stroke="#fff" stroke-width="1.8"/><rect x="3.2" y="5.6" width="8.6" height="1.4" fill="#fff"/><rect x="3.2" y="8.6" width="8.6" height="4.5" fill="#fff"/><rect x="5.2" y="10.3" width="2.4" height="2.8" fill="#217346"/><rect x="3.2" y="1" width="1.3" height="5" fill="#fff"/><rect x="10.5" y="1" width="1.3" height="5" fill="#fff"/></svg>
<svg style="left:50px;top:10px" width="16" height="13" viewBox="0 0 16 13"><path d="M6 1L1.5 5L6 9" fill="none" stroke="#fff" stroke-width="1.8"/><path d="M2 5H10.8A3.7 3.7 0 0 1 10.8 12.4H8.5" fill="none" stroke="#fff" stroke-width="1.9"/></svg>
<svg style="left:69.5px;top:15.0px" width="6" height="4" viewBox="0 0 6 4"><path d="M0 0H6L3.0 3.5Z" fill="#fff"/></svg>
<svg style="left:85px;top:10px" width="16" height="13" viewBox="0 0 16 13"><path d="M10 1L14.5 5L10 9" fill="none" stroke="#5b9a76" stroke-width="1.8"/><path d="M14 5H6A4 4 0 0 0 6 12H8" fill="none" stroke="#5b9a76" stroke-width="1.8"/></svg>
<svg style="left:104.5px;top:15.0px" width="6" height="4" viewBox="0 0 6 4"><path d="M0 0H6L3.0 3.5Z" fill="#5b9a76"/></svg>
<svg style="left:121px;top:9px" width="13" height="15" viewBox="0 0 13 15"><path d="M1 1H8L12 5V14H1Z" fill="none" stroke="#fff" stroke-width="1.3"/><path d="M8 1V5H12" fill="none" stroke="#fff" stroke-width="1.1"/></svg>
<svg style="left:152px;top:12px" width="9" height="9" viewBox="0 0 9 9"><path d="M0.5 1H8.5" stroke="#fff" stroke-width="1.2"/><path d="M0.8 4L4.5 7.7L8.2 4" fill="none" stroke="#fff" stroke-width="1.2"/></svg>
<span class="t" style="top:8.0px;font-size:11.7px;line-height:15px;color:#fff;font-weight:normal;font-style:normal;left:898.0px;transform-origin:0 50%;transform:scaleX(0.960);">Rekap_Aset OP  -  Excel</span>
<div style="left:1668px;top:6px;width:58px;height:19px;background:#fff;"></div>
<span class="t" style="top:8.0px;font-size:11.7px;line-height:15px;color:#217346;font-weight:normal;font-style:normal;left:1679.5px;transform-origin:0 50%;transform:scaleX(1.010);">Sign in</span>
<svg style="left:1751px;top:9px" width="15" height="12" viewBox="0 0 15 12"><rect x="0.5" y="0.5" width="14" height="11" fill="none" stroke="#fff"/><path d="M0.5 3.5H14.5" stroke="#fff"/><path d="M7.5 10V5.5M5.3 7.5L7.5 5.3L9.7 7.5" fill="none" stroke="#fff"/></svg>
<div style="left:1800px;top:15px;width:10px;height:1px;background:#fff;"></div>
<svg style="left:1846px;top:10px" width="11" height="11" viewBox="0 0 11 11"><rect x="0.5" y="2.5" width="8" height="8" fill="none" stroke="#fff"/><path d="M2.5 2.5V0.5H10.5V8.5H8.5" fill="none" stroke="#fff"/></svg>
<svg style="left:1891px;top:10px" width="12" height="12" viewBox="0 0 12 12"><path d="M0.7 0.7L11.3 11.3M11.3 0.7L0.7 11.3" stroke="#fff" stroke-width="1.2"/></svg>
<div style="left:61px;top:34px;width:58px;height:30px;background:#f3f3f3;"></div>
<span class="t" style="top:41.0px;font-size:11.7px;line-height:15px;color:#fff;font-weight:normal;font-style:normal;left:20.5px;transform-origin:0 50%;transform:scaleX(0.952);">File</span>
<span class="t" style="top:41.0px;font-size:11.7px;line-height:15px;color:#217346;font-weight:normal;font-style:normal;left:73.5px;transform-origin:0 50%;transform:scaleX(1.030);">Home</span>
<span class="t" style="top:41.0px;font-size:11.7px;line-height:15px;color:#fff;font-weight:normal;font-style:normal;left:133.5px;transform-origin:0 50%;transform:scaleX(1.011);">Insert</span>
<span class="t" style="top:41.0px;font-size:11.7px;line-height:15px;color:#fff;font-weight:normal;font-style:normal;left:189.0px;transform-origin:0 50%;transform:scaleX(0.988);">Page Layout</span>
<span class="t" style="top:41.0px;font-size:11.7px;line-height:15px;color:#fff;font-weight:normal;font-style:normal;left:281.5px;transform-origin:0 50%;transform:scaleX(0.990);">Formulas</span>
<span class="t" style="top:41.0px;font-size:11.7px;line-height:15px;color:#fff;font-weight:normal;font-style:normal;left:357.0px;transform-origin:0 50%;">Data</span>
<span class="t" style="top:41.0px;font-size:11.7px;line-height:15px;color:#fff;font-weight:normal;font-style:normal;left:408.0px;transform-origin:0 50%;transform:scaleX(0.966);">Review</span>
<span class="t" style="top:41.0px;font-size:11.7px;line-height:15px;color:#fff;font-weight:normal;font-style:normal;left:472.0px;transform-origin:0 50%;transform:scaleX(1.006);">View</span>
<span class="t" style="top:41.0px;font-size:11.7px;line-height:15px;color:#fff;font-weight:normal;font-style:normal;left:524.5px;transform-origin:0 50%;transform:scaleX(1.029);">Help</span>
<svg style="left:578px;top:40px" width="13" height="18" viewBox="0 0 13 18"><path d="M6.5 1A5 5 0 0 0 3.2 9.8C4 10.8 4.2 11.5 4.2 12.5H8.8C8.8 11.5 9 10.8 9.8 9.8A5 5 0 0 0 6.5 1Z" fill="none" stroke="#fff" stroke-width="1.2"/><path d="M4.5 14.5H8.5M5 16.5H8" stroke="#fff" stroke-width="1.1"/></svg>
<span class="t" style="top:41.0px;font-size:11.7px;line-height:15px;color:#fff;font-weight:normal;font-style:normal;left:604.5px;transform-origin:0 50%;transform:scaleX(1.045);">Tell me what you want to do</span>
<svg style="left:1848px;top:40px" width="15" height="17" viewBox="0 0 15 17"><circle cx="7" cy="5" r="4" fill="none" stroke="#fff" stroke-width="1.3"/><path d="M0.8 16C1 11.5 4 9.5 7 9.5" fill="none" stroke="#fff" stroke-width="1.3"/><path d="M11 10.5V16.5M8 13.5H14" stroke="#fff" stroke-width="1.3"/></svg>
<span class="t" style="top:41.0px;font-size:11.7px;line-height:15px;color:#fff;font-weight:normal;font-style:normal;left:1867.5px;transform-origin:0 50%;transform:scaleX(0.952);">Share</span>
<svg style="left:16px;top:71px" width="30" height="31" viewBox="0 0 30 31"><rect x="1" y="4" width="22" height="24" fill="#d0d0d0"/><path d="M5 4V28M9 4V28M13 4V28M17 4V28" stroke="#c2c2c2"/>
<rect x="7" y="1.5" width="10" height="5" rx="1" fill="#bdbdbd"/><rect x="10" y="0" width="4" height="3" fill="#bdbdbd"/>
<path d="M15.5 12.5H24L28.5 17V29.5H15.5Z" fill="#f6f6f6" stroke="#c6c6c6"/><path d="M24 12.5V17H28.5" fill="none" stroke="#c6c6c6"/></svg>
<span class="t" style="top:104.5px;font-size:11.7px;line-height:15px;color:#b4b4b4;font-weight:normal;font-style:normal;left:15.5px;transform-origin:0 50%;transform:scaleX(0.945);">Paste</span>
<svg style="left:25.0px;top:127.0px" width="6" height="4" viewBox="0 0 6 4"><path d="M0 0H6L3.0 3.5Z" fill="#c4c4c4"/></svg>
<svg style="left:53px;top:70px" width="16" height="15" viewBox="0 0 16 15"><path d="M4 0.5L10 9.5M12 0.5L6 9.5" stroke="#555" stroke-width="1.4" fill="none"/>
<circle cx="3.8" cy="11.5" r="2.6" fill="none" stroke="#3a78b8" stroke-width="1.2"/><circle cx="12.2" cy="11.5" r="2.6" fill="none" stroke="#3a78b8" stroke-width="1.2"/></svg>
<span class="t" style="top:71.0px;font-size:11.7px;line-height:15px;color:#262626;font-weight:normal;font-style:normal;left:72.5px;transform-origin:0 50%;transform:scaleX(1.004);">Cut</span>
<svg style="left:53px;top:94px" width="16" height="14" viewBox="0 0 16 14"><path d="M0.5 0.5H6L8.5 3V10.5H0.5Z" fill="#fff" stroke="#555"/><path d="M2 4.2H5.5M2 6.2H5.5M2 8.2H5" stroke="#7aa3d0" stroke-width="0.8"/>
<path d="M6.5 3.5H12L14.5 6V13.5H6.5Z" fill="#fff" stroke="#555"/><path d="M8 7.2H13M8 9.2H13M8 11.2H13" stroke="#7aa3d0" stroke-width="0.8"/></svg>
<span class="t" style="top:94.0px;font-size:11.7px;line-height:15px;color:#262626;font-weight:normal;font-style:normal;left:72.5px;transform-origin:0 50%;">Copy</span>
<svg style="left:109.5px;top:100.0px" width="6" height="4" viewBox="0 0 6 4"><path d="M0 0H6L3.0 3.5Z" fill="#666"/></svg>
<svg style="left:54px;top:116px" width="16" height="15" viewBox="0 0 16 15"><path d="M9 3L13 0.5L15 3.5L11 6Z" fill="#555"/><path d="M2 7.5L9 3.5L11.5 7.5L4.5 11.5Z" fill="#f2c14e"/><path d="M3.5 10L6 14M5.5 9L8 13" stroke="#d9a52f" stroke-width="1.3"/><path d="M6 5.2L8.5 9.2" stroke="#555" stroke-width="1.5"/></svg>
<span class="t" style="top:117.0px;font-size:11.7px;line-height:15px;color:#262626;font-weight:normal;font-style:normal;left:72.5px;transform-origin:0 50%;transform:scaleX(1.007);">Format Painter</span>
<span class="t" style="top:140.1px;font-size:11.7px;line-height:15px;color:#262626;font-weight:normal;font-style:normal;left:-426.5px;width:1000px;text-align:center;transform-origin:50% 50%;transform:scaleX(1.033);">Clipboard</span>
<svg style="left:153px;top:144px" width="8" height="8" viewBox="0 0 8 8"><path d="M0.5 4V0.5H4" fill="none" stroke="#555"/><path d="M2.8 2.8L7 7M7 3.8V7.2H3.8" fill="none" stroke="#555" stroke-width="1.1"/></svg>
<div style="left:164px;top:67px;width:1px;height:85px;background:#d2d2d2;"></div>
<div style="left:173px;top:75px;width:104px;height:23px;background:#fff;box-sizing:border-box;border:1px solid #c6c6c6;"></div>
<div style="left:276px;top:75px;width:51px;height:23px;background:#fff;box-sizing:border-box;border:1px solid #c6c6c6;"></div>
<span class="t" style="top:79.0px;font-size:11.7px;line-height:15px;color:#262626;font-weight:normal;font-style:normal;left:176.5px;transform-origin:0 50%;transform:scaleX(1.010);">Calibri</span>
<svg style="left:259.0px;top:83.0px" width="13" height="7" viewBox="0 0 13 7"><path d="M0.5 0.5L6.5 6.5L12.5 0.5" fill="none" stroke="#444" stroke-width="1.1"/></svg>
<span class="t" style="top:79.0px;font-size:11.7px;line-height:15px;color:#262626;font-weight:normal;font-style:normal;left:280.0px;transform-origin:0 50%;transform:scaleX(1.065);">11</span>
<svg style="left:310.0px;top:83.0px" width="13" height="7" viewBox="0 0 13 7"><path d="M0.5 0.5L6.5 6.5L12.5 0.5" fill="none" stroke="#444" stroke-width="1.1"/></svg>
<span class="t" style="top:77.5px;font-size:13.5px;line-height:18px;color:#444;font-weight:normal;font-style:normal;left:333.5px;transform-origin:0 50%;">A</span>
<svg style="left:341px;top:78px" width="6" height="4" viewBox="0 0 6 4"><path d="M0 4L3 0.3L6 4Z" fill="#3a78b8"/></svg>
<span class="t" style="top:80.5px;font-size:11px;line-height:14px;color:#444;font-weight:normal;font-style:normal;left:356.0px;transform-origin:0 50%;">A</span>
<svg style="left:363px;top:79px" width="6" height="4" viewBox="0 0 6 4"><path d="M0 0L3 3.7L6 0Z" fill="#777"/></svg>
<span class="t" style="top:108.0px;font-size:13px;line-height:17px;color:#444;font-weight:bold;font-style:normal;left:179.5px;transform-origin:0 50%;">B</span>
<span class="t" style="left:201.5px;top:108px;font-family:'Liberation Serif',serif;font-style:italic;font-weight:bold;font-size:14px;line-height:17px;color:#444">I</span>
<span class="t" style="top:108.0px;font-size:12.5px;line-height:16px;color:#444;font-weight:bold;font-style:normal;left:223.5px;transform-origin:0 50%;">U</span>
<div style="left:223px;top:122px;width:9px;height:1px;background:#444;"></div>
<svg style="left:241.5px;top:115.5px" width="6" height="4" viewBox="0 0 6 4"><path d="M0 0H6L3.0 3.5Z" fill="#666"/></svg>
<div style="left:255px;top:106px;width:1px;height:22px;background:#d2d2d2;"></div>
<svg style="left:264px;top:110px" width="14" height="14" viewBox="0 0 14 14"><rect x="0" y="0" width="1" height="1" fill="#6e6e6e"/><rect x="0" y="6" width="1" height="1" fill="#6e6e6e"/><rect x="0" y="12" width="1" height="1" fill="#6e6e6e"/><rect x="2" y="0" width="1" height="1" fill="#6e6e6e"/><rect x="2" y="6" width="1" height="1" fill="#6e6e6e"/><rect x="2" y="12" width="1" height="1" fill="#6e6e6e"/><rect x="4" y="0" width="1" height="1" fill="#6e6e6e"/><rect x="4" y="6" width="1" height="1" fill="#6e6e6e"/><rect x="4" y="12" width="1" height="1" fill="#6e6e6e"/><rect x="6" y="0" width="1" height="1" fill="#6e6e6e"/><rect x="6" y="6" width="1" height="1" fill="#6e6e6e"/><rect x="6" y="12" width="1" height="1" fill="#6e6e6e"/><rect x="8" y="0" width="1" height="1" fill="#6e6e6e"/><rect x="8" y="6" width="1" height="1" fill="#6e6e6e"/><rect x="8" y="12" width="1" height="1" fill="#6e6e6e"/><rect x="10" y="0" width="1" height="1" fill="#6e6e6e"/><rect x="10" y="6" width="1" height="1" fill="#6e6e6e"/><rect x="10" y="12" width="1" height="1" fill="#6e6e6e"/><rect x="12" y="0" width="1" height="1" fill="#6e6e6e"/><rect x="12" y="6" width="1" height="1" fill="#6e6e6e"/><rect x="12" y="12" width="1" height="1" fill="#6e6e6e"/><rect x="0" y="2" width="1" height="1" fill="#6e6e6e"/><rect x="6" y="2" width="1" height="1" fill="#6e6e6e"/><rect x="12" y="2" width="1" height="1" fill="#6e6e6e"/><rect x="0" y="4" width="1" height="1" fill="#6e6e6e"/><rect x="6" y="4" width="1" height="1" fill="#6e6e6e"/><rect x="12" y="4" width="1" height="1" fill="#6e6e6e"/><rect x="0" y="8" width="1" height="1" fill="#6e6e6e"/><rect x="6" y="8" width="1" height="1" fill="#6e6e6e"/><rect x="12" y="8" width="1" height="1" fill="#6e6e6e"/><rect x="0" y="10" width="1" height="1" fill="#6e6e6e"/><rect x="6" y="10" width="1" height="1" fill="#6e6e6e"/><rect x="12" y="10" width="1" height="1" fill="#6e6e6e"/></svg>
<svg style="left:284.0px;top:115.5px" width="6" height="4" viewBox="0 0 6 4"><path d="M0 0H6L3.0 3.5Z" fill="#666"/></svg>
<div style="left:298px;top:106px;width:1px;height:22px;background:#d2d2d2;"></div>
<svg style="left:306px;top:108px" width="17" height="18" viewBox="0 0 17 18"><path d="M6.2 4.5L12 9.8L7.2 14.5L1.8 9.2Z" fill="#fff" stroke="#505050" stroke-width="1.4"/><path d="M7.6 0.8V6.5" stroke="#505050" stroke-width="1.2"/><path d="M5.8 2.2A1.8 1.8 0 0 1 9.4 2.2" fill="none" stroke="#505050" stroke-width="1.1"/>
<path d="M11.2 5.8C14.5 6.5 15.8 9.8 14.6 12.6C14 10 12.6 9.3 10.6 9.2Z" fill="#3a78b8"/><rect x="0.5" y="14.5" width="15.5" height="3" fill="#fff" stroke="#8c8c8c"/></svg>
<svg style="left:327.5px;top:115.5px" width="6" height="4" viewBox="0 0 6 4"><path d="M0 0H6L3.0 3.5Z" fill="#666"/></svg>
<span class="t" style="top:107.0px;font-size:12.5px;line-height:16px;color:#444;font-weight:normal;font-style:normal;left:343.5px;transform-origin:0 50%;">A</span>
<div style="left:340px;top:121px;width:16px;height:4px;background:#e81123;"></div>
<svg style="left:361.5px;top:115.5px" width="6" height="4" viewBox="0 0 6 4"><path d="M0 0H6L3.0 3.5Z" fill="#666"/></svg>
<span class="t" style="top:140.1px;font-size:11.7px;line-height:15px;color:#262626;font-weight:normal;font-style:normal;left:-237.0px;width:1000px;text-align:center;transform-origin:50% 50%;transform:scaleX(1.014);">Font</span>
<svg style="left:367px;top:144px" width="8" height="8" viewBox="0 0 8 8"><path d="M0.5 4V0.5H4" fill="none" stroke="#555"/><path d="M2.8 2.8L7 7M7 3.8V7.2H3.8" fill="none" stroke="#555" stroke-width="1.1"/></svg>
<div style="left:378px;top:67px;width:1px;height:85px;background:#d2d2d2;"></div>
<div style="left:431px;top:75px;width:22px;height:23px;background:#c6c6c6;"></div>
<div style="left:387px;top:106px;width:22px;height:23px;background:#c6c6c6;"></div>
<svg style="left:391px;top:79px" width="15" height="9" viewBox="0 0 15 9"><rect x="0" y="0" width="14" height="1" fill="#555"/><rect x="0" y="3" width="14" height="1" fill="#555"/><rect x="0" y="6" width="14" height="1" fill="#555"/></svg>
<svg style="left:413px;top:82px" width="15" height="9" viewBox="0 0 15 9"><rect x="0" y="0" width="14" height="1" fill="#555"/><rect x="0" y="3" width="14" height="1" fill="#555"/><rect x="0" y="6" width="14" height="1" fill="#555"/></svg>
<svg style="left:435px;top:87px" width="15" height="9" viewBox="0 0 15 9"><rect x="0" y="0" width="14" height="1" fill="#555"/><rect x="0" y="3" width="14" height="1" fill="#555"/><rect x="0" y="6" width="14" height="1" fill="#555"/></svg>
<svg style="left:391px;top:112px" width="15" height="12" viewBox="0 0 15 12"><rect x="0" y="0" width="14" height="1" fill="#555"/><rect x="0" y="3" width="9" height="1" fill="#555"/><rect x="0" y="6" width="14" height="1" fill="#555"/><rect x="0" y="9" width="9" height="1" fill="#555"/></svg>
<svg style="left:413px;top:112px" width="15" height="12" viewBox="0 0 15 12"><rect x="0" y="0" width="14" height="1" fill="#555"/><rect x="2" y="3" width="10" height="1" fill="#555"/><rect x="0" y="6" width="14" height="1" fill="#555"/><rect x="2" y="9" width="10" height="1" fill="#555"/></svg>
<svg style="left:435px;top:112px" width="15" height="12" viewBox="0 0 15 12"><rect x="0" y="0" width="14" height="1" fill="#555"/><rect x="5" y="3" width="9" height="1" fill="#555"/><rect x="0" y="6" width="14" height="1" fill="#555"/><rect x="5" y="9" width="9" height="1" fill="#555"/></svg>
<div style="left:457px;top:75px;width:1px;height:23px;background:#d2d2d2;"></div>
<div style="left:457px;top:105px;width:1px;height:23px;background:#d2d2d2;"></div>
<svg style="left:465px;top:78px" width="17" height="15" viewBox="0 0 17 15"><text x="0" y="11" font-family="Liberation Sans" font-size="9.5" fill="#555" transform="rotate(-40 6 9)">ab</text><path d="M4 14L15 4M15 4H11.5M15 4V7.5" fill="none" stroke="#555" stroke-width="1.1"/></svg>
<svg style="left:484.5px;top:85.0px" width="6" height="4" viewBox="0 0 6 4"><path d="M0 0H6L3.0 3.5Z" fill="#666"/></svg>
<svg style="left:465px;top:110px" width="17" height="13" viewBox="0 0 17 13"><path d="M0 0.5H16M8 3.5H16M8 6.5H16M8 9.5H16M0 12.5H16" stroke="#555"/><path d="M6.5 6.5H0.8M3.5 3.8L0.8 6.5L3.5 9.2" fill="none" stroke="#2f6db5" stroke-width="1.6"/></svg>
<svg style="left:487px;top:110px" width="17" height="13" viewBox="0 0 17 13"><path d="M0 0.5H16M8 3.5H16M8 6.5H16M8 9.5H16M0 12.5H16" stroke="#555"/><path d="M0.5 6.5H6.2M3.5 3.8L6.2 6.5L3.5 9.2" fill="none" stroke="#2f6db5" stroke-width="1.6"/></svg>
<div style="left:510px;top:72px;width:1px;height:56px;background:#d2d2d2;"></div>
<svg style="left:519px;top:78px" width="14" height="16" viewBox="0 0 14 16"><text x="0" y="7" font-family="Liberation Sans" font-size="8.5" fill="#444">ab</text><text x="0" y="14.5" font-family="Liberation Sans" font-size="8.5" fill="#444">c</text><path d="M12.5 8.5V12H7.5M9.3 10.2L7.5 12L9.3 13.8" fill="none" stroke="#2f6db5" stroke-width="1"/></svg>
<span class="t" style="top:79.0px;font-size:11.7px;line-height:15px;color:#262626;font-weight:normal;font-style:normal;left:537.0px;transform-origin:0 50%;transform:scaleX(1.033);">Wrap Text</span>
<svg style="left:518px;top:109px" width="16" height="15" viewBox="0 0 16 15"><path d="M0.5 0.5H15.5V14.5H0.5ZM0.5 4H15.5M0.5 11H15.5M5.5 0.5V4M10.5 0.5V4M5.5 11V14.5M10.5 11V14.5" fill="none" stroke="#555"/><path d="M3 7.5H13M4.8 5.8L3 7.5L4.8 9.2M11.2 5.8L13 7.5L11.2 9.2" fill="none" stroke="#555"/></svg>
<span class="t" style="top:110.0px;font-size:11.7px;line-height:15px;color:#262626;font-weight:normal;font-style:normal;left:537.0px;transform-origin:0 50%;transform:scaleX(1.038);">Merge &amp; Center</span>
<svg style="left:631.5px;top:116.0px" width="6" height="4" viewBox="0 0 6 4"><path d="M0 0H6L3.0 3.5Z" fill="#666"/></svg>
<span class="t" style="top:140.1px;font-size:11.7px;line-height:15px;color:#262626;font-weight:normal;font-style:normal;left:5.5px;width:1000px;text-align:center;transform-origin:50% 50%;transform:scaleX(1.055);">Alignment</span>
<svg style="left:638px;top:144px" width="8" height="8" viewBox="0 0 8 8"><path d="M0.5 4V0.5H4" fill="none" stroke="#555"/><path d="M2.8 2.8L7 7M7 3.8V7.2H3.8" fill="none" stroke="#555" stroke-width="1.1"/></svg>
<div style="left:649px;top:67px;width:1px;height:85px;background:#d2d2d2;"></div>
<div style="left:658px;top:75px;width:131px;height:23px;background:#fff;box-sizing:border-box;border:1px solid #c6c6c6;"></div>
<span class="t" style="top:79.0px;font-size:11.7px;line-height:15px;color:#262626;font-weight:normal;font-style:normal;left:662.0px;transform-origin:0 50%;transform:scaleX(0.979);">General</span>
<svg style="left:771.5px;top:83.5px" width="13" height="7" viewBox="0 0 13 7"><path d="M0.5 0.5L6.5 6.5L12.5 0.5" fill="none" stroke="#444" stroke-width="1.1"/></svg>
<svg style="left:660px;top:108px" width="19" height="17" viewBox="0 0 19 17"><rect x="0.8" y="0.8" width="15" height="8.5" fill="#fff" stroke="#2f6db5" stroke-width="1.4"/><circle cx="8.3" cy="5" r="1.8" fill="#2f6db5"/>
<ellipse cx="13" cy="8.5" rx="3.5" ry="1.4" fill="#e9b44c"/><ellipse cx="13" cy="11" rx="3.5" ry="1.4" fill="#e9b44c"/><ellipse cx="8" cy="12.5" rx="3.5" ry="1.4" fill="#e9b44c"/><ellipse cx="8" cy="15" rx="3.5" ry="1.4" fill="#e9b44c"/></svg>
<svg style="left:682.5px;top:116.0px" width="6" height="4" viewBox="0 0 6 4"><path d="M0 0H6L3.0 3.5Z" fill="#666"/></svg>
<span class="t" style="top:108.0px;font-size:14px;line-height:18px;color:#555;font-weight:normal;font-style:normal;left:697.0px;transform-origin:0 50%;">%</span>
<span class="t" style="left:720.5px;top:102.5px;font-family:'Liberation Serif',serif;font-weight:bold;font-size:18px;line-height:22px;color:#555">,</span>
<div style="left:740px;top:105px;width:1px;height:23px;background:#d2d2d2;"></div>
<svg style="left:747px;top:109px" width="16" height="15" viewBox="0 0 16 15"><text x="6" y="6.5" font-family="Liberation Sans" font-size="7.5" fill="#555">.0</text><text x="2.5" y="14" font-family="Liberation Sans" font-size="7.5" fill="#555">.00</text><path d="M5.5 3.5H0.8M2.6 1.7L0.8 3.5L2.6 5.3" fill="none" stroke="#2f6db5" stroke-width="1.1"/></svg>
<svg style="left:769px;top:109px" width="16" height="15" viewBox="0 0 16 15"><text x="3" y="6.5" font-family="Liberation Sans" font-size="7.5" fill="#555">.00</text><text x="7" y="14" font-family="Liberation Sans" font-size="7.5" fill="#555">.0</text><path d="M0.8 11H5.8M4 9.2L5.8 11L4 12.8" fill="none" stroke="#2f6db5" stroke-width="1.1"/></svg>
<span class="t" style="top:140.1px;font-size:11.7px;line-height:15px;color:#262626;font-weight:normal;font-style:normal;left:215.0px;width:1000px;text-align:center;transform-origin:50% 50%;transform:scaleX(1.048);">Number</span>
<svg style="left:785px;top:144px" width="8" height="8" viewBox="0 0 8 8"><path d="M0.5 4V0.5H4" fill="none" stroke="#555"/><path d="M2.8 2.8L7 7M7 3.8V7.2H3.8" fill="none" stroke="#555" stroke-width="1.1"/></svg>
<div style="left:796px;top:67px;width:1px;height:85px;background:#d2d2d2;"></div>
<svg style="left:827px;top:72px" width="31" height="30" viewBox="0 0 31 30"><rect x="0.5" y="0.5" width="27" height="24" fill="#fff" stroke="#8a8a8a"/><path d="M0.5 6.5H27.5M0.5 12.5H27.5M0.5 18.5H27.5M7.5 0.5V24.5M20.5 0.5V24.5" stroke="#b0b0b0" fill="none"/>
<rect x="8" y="1" width="6" height="5" fill="#d9534f"/><rect x="8" y="7" width="10" height="5" fill="#3a78b8"/><rect x="8" y="13" width="7" height="5" fill="#d9534f"/><rect x="8" y="19" width="4" height="5" fill="#3a78b8"/>
<rect x="14.5" y="17.5" width="15" height="12" fill="#fff" stroke="#777"/><path d="M18 22H26M18 25.5H26M24.5 19.5L19.5 28" stroke="#444" stroke-width="1.1"/></svg>
<span class="t" style="top:104.5px;font-size:11.7px;line-height:15px;color:#262626;font-weight:normal;font-style:normal;left:341.0px;width:1000px;text-align:center;transform-origin:50% 50%;transform:scaleX(1.043);">Conditional</span>
<span class="t" style="top:121.0px;font-size:11.7px;line-height:15px;color:#262626;font-weight:normal;font-style:normal;left:336.5px;width:1000px;text-align:center;transform-origin:50% 50%;transform:scaleX(1.044);">Formatting</span>
<svg style="left:868.5px;top:127.0px" width="6" height="4" viewBox="0 0 6 4"><path d="M0 0H6L3.0 3.5Z" fill="#666"/></svg>
<svg style="left:891px;top:73px" width="32" height="29" viewBox="0 0 32 29"><rect x="0.5" y="0.5" width="24" height="20" fill="#fff" stroke="#8a8a8a"/><rect x="7" y="5.5" width="18" height="15" fill="#b8cde4"/>
<path d="M0.5 5.5H24.5M0.5 10.5H24.5M0.5 15.5H24.5M6.5 0.5V20.5M12.5 0.5V20.5M18.5 0.5V20.5" stroke="#9aa7b5" fill="none"/>
<path d="M30.5 6L21 17.5L18.5 15.5L28.5 4.5Z" fill="#777"/><path d="M20 16.5C17 17 15 20 12 26.5C16 27 20 24 21.5 18.5Z" fill="#3a78b8"/></svg>
<span class="t" style="top:104.5px;font-size:11.7px;line-height:15px;color:#262626;font-weight:normal;font-style:normal;left:405.5px;width:1000px;text-align:center;transform-origin:50% 50%;transform:scaleX(0.988);">Format as</span>
<span class="t" style="top:121.0px;font-size:11.7px;line-height:15px;color:#262626;font-weight:normal;font-style:normal;left:402.0px;width:1000px;text-align:center;transform-origin:50% 50%;transform:scaleX(1.024);">Table</span>
<svg style="left:917.5px;top:127.0px" width="6" height="4" viewBox="0 0 6 4"><path d="M0 0H6L3.0 3.5Z" fill="#666"/></svg>
<div style="left:935px;top:70px;width:549px;height:62px;background:#fff;box-sizing:border-box;border:1px solid #d4d4d4;"></div>
<span class="t" style="top:78.0px;font-size:13.2px;line-height:17px;color:#000;font-weight:normal;font-style:normal;left:942.7px;transform-origin:0 50%;transform:scaleX(1.010);">Percent 2</span>
<div style="left:1045px;top:76px;width:210px;height:23px;overflow:hidden"><span class="t" style="position:absolute;left:3.7px;top:-8.5px;font-family:'Liberation Serif',serif;font-weight:bold;font-size:26px;line-height:30px;color:#1b365d;letter-spacing:-0.15px">Title 2</span><span class="t" style="position:absolute;left:110.1px;top:-8.5px;font-family:'Liberation Serif',serif;font-weight:bold;font-size:26px;line-height:30px;color:#1b365d;letter-spacing:-0.15px">Title 3</span></div>
<span class="t" style="top:106.0px;font-size:13.2px;line-height:17px;color:#e8262a;font-weight:normal;font-style:normal;left:942.7px;transform-origin:0 50%;transform:scaleX(1.044);">Warning Text 2</span>
<span class="t" style="top:106.0px;font-size:13.2px;line-height:17px;color:#e8262a;font-weight:normal;font-style:normal;left:1048.7px;transform-origin:0 50%;transform:scaleX(1.044);">Warning Text 3</span>
<div style="left:1148.5px;top:101.5px;width:105px;height:27px;background:#fff;box-sizing:border-box;border:3px solid #c6c6c6;"></div>
<span class="t" style="top:106.0px;font-size:13.2px;line-height:17px;color:#000;font-weight:normal;font-style:normal;left:1155.2px;transform-origin:0 50%;transform:scaleX(1.065);">Normal</span>
<div style="left:1257px;top:76px;width:100px;height:1px;background:#44457a;"></div>
<div style="left:1257px;top:95px;width:100px;height:1px;background:#44457a;"></div>
<div style="left:1257px;top:97px;width:100px;height:1px;background:#44457a;"></div>
<span class="t" style="top:78.0px;font-size:13.2px;line-height:17px;color:#000;font-weight:bold;font-style:normal;left:1260.7px;transform-origin:0 50%;transform:scaleX(0.981);">Total 2</span>
<div style="left:1363px;top:76px;width:100px;height:1px;background:#44457a;"></div>
<div style="left:1363px;top:95px;width:100px;height:1px;background:#44457a;"></div>
<div style="left:1363px;top:97px;width:100px;height:1px;background:#44457a;"></div>
<span class="t" style="top:78.0px;font-size:13.2px;line-height:17px;color:#000;font-weight:bold;font-style:normal;left:1366.7px;transform-origin:0 50%;transform:scaleX(0.981);">Total 3</span>
<div style="left:1257px;top:104px;width:100px;height:22px;background:#ffc7ce;"></div>
<span class="t" style="top:106.0px;font-size:13.2px;line-height:17px;color:#9c0006;font-weight:normal;font-style:normal;left:1260.7px;transform-origin:0 50%;transform:scaleX(0.986);">Bad</span>
<div style="left:1363px;top:104px;width:100px;height:22px;background:#c6efce;"></div>
<span class="t" style="top:106.0px;font-size:13.2px;line-height:17px;color:#006100;font-weight:normal;font-style:normal;left:1366.7px;transform-origin:0 50%;transform:scaleX(1.024);">Good</span>
<div style="left:1467px;top:70px;width:17px;height:21px;background:#f6f6f6;box-sizing:border-box;border:1px solid #c6c6c6;"></div>
<div style="left:1467px;top:90px;width:17px;height:21px;background:#f6f6f6;box-sizing:border-box;border:1px solid #c6c6c6;"></div>
<div style="left:1467px;top:110px;width:17px;height:22px;background:#f6f6f6;box-sizing:border-box;border:1px solid #c6c6c6;"></div>
<svg style="left:1469.0px;top:76.5px" width="13" height="7" viewBox="0 0 13 7"><path d="M0.5 6.5L6.5 0.5L12.5 6.5" fill="none" stroke="#555" stroke-width="1.1"/></svg>
<svg style="left:1469.0px;top:97.0px" width="13" height="7" viewBox="0 0 13 7"><path d="M0.5 0.5L6.5 6.5L12.5 0.5" fill="none" stroke="#555" stroke-width="1.1"/></svg>
<div style="left:1470px;top:113px;width:11px;height:1px;background:#555;"></div>
<svg style="left:1469.0px;top:118.0px" width="13" height="7" viewBox="0 0 13 7"><path d="M0.5 0.5L6.5 6.5L12.5 0.5" fill="none" stroke="#555" stroke-width="1.1"/></svg>
<span class="t" style="top:140.1px;font-size:11.7px;line-height:15px;color:#262626;font-weight:normal;font-style:normal;left:645.5px;width:1000px;text-align:center;transform-origin:50% 50%;transform:scaleX(0.958);">Styles</span>
<div style="left:1494px;top:67px;width:1px;height:85px;background:#d2d2d2;"></div>
<svg style="left:1511px;top:72px" width="27" height="27" viewBox="0 0 27 27"><path d="M0.5 0.5H14.5V5.5H0.5ZM7.5 0.5V5.5" fill="#fff" stroke="#777"/><path d="M0.5 16.5H14.5V26.5H0.5ZM7.5 16.5V26.5M0.5 21.5H14.5" fill="#fff" stroke="#777"/>
<rect x="11.5" y="8.5" width="14" height="5" fill="#c5d5e8" stroke="#8a9bb0"/><path d="M18.5 8.5V13.5" stroke="#8a9bb0"/><path d="M8 11H1.5M4 8.3L1.3 11L4 13.7" fill="none" stroke="#2f6db5" stroke-width="1.5"/></svg>
<span class="t" style="top:104.5px;font-size:11.7px;line-height:15px;color:#262626;font-weight:normal;font-style:normal;left:1023.5px;width:1000px;text-align:center;transform-origin:50% 50%;transform:scaleX(1.011);">Insert</span>
<svg style="left:1520.5px;top:127.0px" width="6" height="4" viewBox="0 0 6 4"><path d="M0 0H6L3.0 3.5Z" fill="#666"/></svg>
<svg style="left:1552px;top:72px" width="31" height="27" viewBox="0 0 31 27"><path d="M0.5 0.5H14.5V5.5H0.5ZM7.5 0.5V5.5" fill="#fff" stroke="#777"/><path d="M0.5 16.5H14.5V26.5H0.5ZM7.5 16.5V26.5M0.5 21.5H14.5" fill="#fff" stroke="#777"/>
<rect x="6.5" y="8.5" width="9" height="5" fill="#c5d5e8" stroke="#8a9bb0"/><path d="M16 6L29 18M29 6L16 18" stroke="#d9534f" stroke-width="1.7"/></svg>
<span class="t" style="top:104.5px;font-size:11.7px;line-height:15px;color:#262626;font-weight:normal;font-style:normal;left:1065.5px;width:1000px;text-align:center;transform-origin:50% 50%;transform:scaleX(1.012);">Delete</span>
<svg style="left:1562.5px;top:127.0px" width="6" height="4" viewBox="0 0 6 4"><path d="M0 0H6L3.0 3.5Z" fill="#666"/></svg>
<svg style="left:1593px;top:70px" width="30" height="32" viewBox="0 0 30 32"><path d="M2.5 3.5H23.5M2.5 1V6M23.5 1V6M5 1.5L2.8 3.5L5 5.5M21 1.5L23.2 3.5L21 5.5" fill="none" stroke="#2f6db5"/>
<path d="M0.5 7.5H27.5V27.5H21L19 30.5H9.5L7.5 27.5H0.5Z" fill="#fff" stroke="#8a8a8a"/><path d="M0.5 12.5H27.5M0.5 17.5H27.5M0.5 22.5H27.5M7.5 7.5V27.5M14.5 7.5V27.5M21.5 7.5V27.5" stroke="#c4c4c4" fill="none"/>
<rect x="8" y="12" width="7" height="10" fill="#2f6db5"/></svg>
<span class="t" style="top:104.5px;font-size:11.7px;line-height:15px;color:#262626;font-weight:normal;font-style:normal;left:1108.0px;width:1000px;text-align:center;transform-origin:50% 50%;transform:scaleX(1.014);">Format</span>
<svg style="left:1605.0px;top:127.0px" width="6" height="4" viewBox="0 0 6 4"><path d="M0 0H6L3.0 3.5Z" fill="#666"/></svg>
<span class="t" style="top:140.1px;font-size:11.7px;line-height:15px;color:#262626;font-weight:normal;font-style:normal;left:1066.0px;width:1000px;text-align:center;transform-origin:50% 50%;transform:scaleX(0.946);">Cells</span>
<div style="left:1637px;top:67px;width:1px;height:85px;background:#d2d2d2;"></div>
<svg style="left:1649px;top:70px" width="16" height="15" viewBox="0 0 16 15"><path d="M14 3V1H1.5L8 7.5L1.5 14H14V12" fill="none" stroke="#444" stroke-width="1.7"/></svg>
<span class="t" style="top:71.0px;font-size:11.7px;line-height:15px;color:#262626;font-weight:normal;font-style:normal;left:1668.5px;transform-origin:0 50%;transform:scaleX(1.021);">AutoSum</span>
<svg style="left:1727.5px;top:77.0px" width="6" height="4" viewBox="0 0 6 4"><path d="M0 0H6L3.0 3.5Z" fill="#666"/></svg>
<svg style="left:1649px;top:93px" width="16" height="16" viewBox="0 0 16 16"><rect x="0.8" y="0.8" width="13.4" height="14.4" fill="#fff" stroke="#777" stroke-width="1.2"/><rect x="0.8" y="0.8" width="13.4" height="2.5" fill="#777"/><path d="M7.5 5V12.5M4.2 9.5L7.5 12.8L10.8 9.5" fill="none" stroke="#2f6db5" stroke-width="1.7"/></svg>
<span class="t" style="top:94.0px;font-size:11.7px;line-height:15px;color:#262626;font-weight:normal;font-style:normal;left:1668.5px;transform-origin:0 50%;transform:scaleX(0.975);">Fill</span>
<svg style="left:1685.5px;top:100.0px" width="6" height="4" viewBox="0 0 6 4"><path d="M0 0H6L3.0 3.5Z" fill="#666"/></svg>
<svg style="left:1650px;top:116px" width="14" height="14" viewBox="0 0 14 14"><path d="M8.5 0.5L13 5L6.5 11.5L2 7Z" fill="#e8718d"/><path d="M2 7L6.5 11.5L4.5 13.5H2L0.5 12V9Z" fill="#f6c4d0"/></svg>
<span class="t" style="top:117.0px;font-size:11.7px;line-height:15px;color:#262626;font-weight:normal;font-style:normal;left:1668.5px;transform-origin:0 50%;transform:scaleX(0.962);">Clear</span>
<svg style="left:1697.5px;top:123.0px" width="6" height="4" viewBox="0 0 6 4"><path d="M0 0H6L3.0 3.5Z" fill="#666"/></svg>
<svg style="left:1744px;top:72px" width="30" height="28" viewBox="0 0 30 28"><text x="0" y="12" font-family="Liberation Sans" font-weight="bold" font-size="14" fill="#3a78b8">A</text><text x="0.5" y="27" font-family="Liberation Sans" font-weight="bold" font-size="14" fill="#a85fb5">Z</text>
<path d="M12 8.5H29.5L22.5 15.5V22.5H19.5V15.5Z" fill="#858585"/></svg>
<span class="t" style="top:104.5px;font-size:11.7px;line-height:15px;color:#262626;font-weight:normal;font-style:normal;left:1259.0px;width:1000px;text-align:center;transform-origin:50% 50%;transform:scaleX(1.062);">Sort &amp;</span>
<span class="t" style="top:121.0px;font-size:11.7px;line-height:15px;color:#262626;font-weight:normal;font-style:normal;left:1255.0px;width:1000px;text-align:center;transform-origin:50% 50%;transform:scaleX(1.007);">Filter</span>
<svg style="left:1770.5px;top:127.0px" width="6" height="4" viewBox="0 0 6 4"><path d="M0 0H6L3.0 3.5Z" fill="#666"/></svg>
<svg style="left:1787px;top:71px" width="30" height="29" viewBox="0 0 30 29"><circle cx="18.5" cy="11" r="9" fill="#fff" stroke="#3a78b8" stroke-width="1.6" fill-opacity="0.85"/><path d="M12 18L2.5 27" stroke="#3a78b8" stroke-width="3" stroke-linecap="round"/></svg>
<span class="t" style="top:104.5px;font-size:11.7px;line-height:15px;color:#262626;font-weight:normal;font-style:normal;left:1302.0px;width:1000px;text-align:center;transform-origin:50% 50%;transform:scaleX(1.050);">Find &amp;</span>
<span class="t" style="top:121.0px;font-size:11.7px;line-height:15px;color:#262626;font-weight:normal;font-style:normal;left:1297.5px;width:1000px;text-align:center;transform-origin:50% 50%;transform:scaleX(0.967);">Select</span>
<svg style="left:1815.5px;top:127.0px" width="6" height="4" viewBox="0 0 6 4"><path d="M0 0H6L3.0 3.5Z" fill="#666"/></svg>
<span class="t" style="top:140.1px;font-size:11.7px;line-height:15px;color:#262626;font-weight:normal;font-style:normal;left:1234.5px;width:1000px;text-align:center;transform-origin:50% 50%;transform:scaleX(1.031);">Editing</span>
<div style="left:1831px;top:67px;width:1px;height:85px;background:#d2d2d2;"></div>
<svg style="left:1901.5px;top:146.5px" width="11" height="6" viewBox="0 0 11 6"><path d="M0.5 5.5L5.5 0.5L10.5 5.5" fill="none" stroke="#444" stroke-width="1.1"/></svg>
<div style="left:5px;top:167px;width:102px;height:26px;background:#fff;box-sizing:border-box;border:1px solid #d0d0d0;"></div>
<span class="t" style="top:173.0px;font-size:11.9px;line-height:15px;color:#444;font-weight:normal;font-style:normal;left:12.5px;transform-origin:0 50%;transform:scaleX(1.008);">F1249</span>
<svg style="left:92.5px;top:177.5px" width="8" height="5" viewBox="0 0 8 5"><path d="M0 0H8L4.0 4.5Z" fill="#666"/></svg>
<div style="left:121.5px;top:176px;width:2px;height:2px;background:#b8b8b8;border-radius:1px;"></div>
<div style="left:121.5px;top:180px;width:2px;height:2px;background:#b8b8b8;border-radius:1px;"></div>
<div style="left:121.5px;top:184px;width:2px;height:2px;background:#b8b8b8;border-radius:1px;"></div>
<div style="left:137px;top:167px;width:110px;height:26px;background:#fff;box-sizing:border-box;border:1px solid #d0d0d0;"></div>
<svg style="left:150px;top:175px" width="12" height="11" viewBox="0 0 12 11"><path d="M1 0.5L11 10.5M11 0.5L1 10.5" stroke="#b9b9b9" stroke-width="1.4"/></svg>
<svg style="left:185px;top:175px" width="14" height="11" viewBox="0 0 14 11"><path d="M1 6L5 10L13 1" fill="none" stroke="#c0c0c0" stroke-width="1.8"/></svg>
<span class="t" style="left:222px;top:171px;font-family:'Liberation Serif',serif;font-style:italic;font-size:15px;line-height:18px;color:#555">f<span style="font-size:10px">x</span></span>
<div style="left:250px;top:167px;width:1665px;height:46px;background:#fff;box-sizing:border-box;border:1px solid #d0d0d0;"></div>
<span class="t" style="top:173.0px;font-size:11.9px;line-height:15px;color:#444;font-weight:normal;font-style:normal;left:262.5px;transform-origin:0 50%;transform:scaleX(1.039);">2020</span>
<svg style="left:1902.5px;top:176.0px" width="8" height="5" viewBox="0 0 8 5"><path d="M0.5 4.5L4.0 0.5L7.5 4.5" fill="none" stroke="#666" stroke-width="1.6"/></svg>
<div style="left:1902px;top:240px;width:15px;height:736px;background:#d8d8d8;"></div>
<div style="left:1820px;top:997px;width:64px;height:15px;background:#d8d8d8;"></div>
<div style="left:1902px;top:225px;width:15px;height:15px;background:#fff;box-sizing:border-box;border:1px solid #c6c6c6;"></div>
<svg style="left:1906px;top:230px" width="7" height="5" viewBox="0 0 7 5"><path d="M0 4.5L3.5 0.5L7 4.5Z" fill="#777"/></svg>
<div style="left:1902px;top:976px;width:15px;height:14px;background:#fff;box-sizing:border-box;border:1px solid #c6c6c6;"></div>
<svg style="left:1906px;top:981px" width="7" height="5" viewBox="0 0 7 5"><path d="M0 0.5L3.5 4.5L7 0.5Z" fill="#777"/></svg>
<div style="left:1902px;top:955px;width:15px;height:20px;background:#fff;box-sizing:border-box;border:1px solid #c6c6c6;"></div>
<svg style="left:26px;top:998px" width="6" height="9" viewBox="0 0 6 9"><path d="M5.5 0.5V8.5L0.5 4.5Z" fill="#c8c8c8"/></svg>
<svg style="left:56px;top:998px" width="6" height="9" viewBox="0 0 6 9"><path d="M0.5 0.5V8.5L5.5 4.5Z" fill="#c8c8c8"/></svg>
<div style="left:101px;top:990px;width:91px;height:23px;background:#fff;"></div>
<div style="left:100px;top:990px;width:1px;height:24px;background:#ababab;"></div>
<div style="left:191px;top:990px;width:1px;height:24px;background:#ababab;"></div>
<div style="left:100px;top:1013px;width:92px;height:2px;background:#217346;"></div>
<span class="t" style="top:995.0px;font-size:12.2px;line-height:16px;color:#217346;font-weight:bold;font-style:normal;left:112.5px;transform-origin:0 50%;transform:scaleX(1.023);">Rekap Aset</span>
<svg style="left:224px;top:995px" width="17" height="17" viewBox="0 0 17 17"><circle cx="8.5" cy="8.5" r="7.5" fill="none" stroke="#8a8a8a" stroke-width="1.2"/><path d="M8.5 4.5V12.5M4.5 8.5H12.5" stroke="#666" stroke-width="1.6"/></svg>
<div style="left:1151.5px;top:999px;width:2px;height:2px;background:#b8b8b8;border-radius:1px;"></div>
<div style="left:1151.5px;top:1003px;width:2px;height:2px;background:#b8b8b8;border-radius:1px;"></div>
<div style="left:1151.5px;top:1007px;width:2px;height:2px;background:#b8b8b8;border-radius:1px;"></div>
<div style="left:1169px;top:997px;width:15px;height:15px;background:#fff;box-sizing:border-box;border:1px solid #c6c6c6;"></div>
<svg style="left:1174px;top:1001px" width="5" height="7" viewBox="0 0 5 7"><path d="M4.5 0L0.5 3.5L4.5 7Z" fill="#777"/></svg>
<div style="left:1184px;top:997px;width:636px;height:15px;background:#fff;box-sizing:border-box;border:1px solid #c6c6c6;"></div>
<div style="left:1884px;top:997px;width:15px;height:15px;background:#fff;box-sizing:border-box;border:1px solid #c6c6c6;"></div>
<svg style="left:1889px;top:1001px" width="5" height="7" viewBox="0 0 5 7"><path d="M0.5 0L4.5 3.5L0.5 7Z" fill="#777"/></svg>
<div style="left:0px;top:1018px;width:1920px;height:1px;background:#d0d0d0;"></div>
<span class="t" style="top:1020.0px;font-size:11.7px;line-height:15px;color:#444;font-weight:normal;font-style:normal;left:8.5px;transform-origin:0 50%;transform:scaleX(0.959);">Ready</span>
<span class="t" style="top:1021.0px;font-size:11.7px;line-height:15px;color:#444;font-weight:normal;font-style:normal;left:1402.0px;transform-origin:0 50%;transform:scaleX(0.935);">Average: 2021</span>
<span class="t" style="top:1021.0px;font-size:11.7px;line-height:15px;color:#444;font-weight:normal;font-style:normal;left:1490.0px;transform-origin:0 50%;transform:scaleX(0.995);">Count: 9</span>
<span class="t" style="top:1021.0px;font-size:11.7px;line-height:15px;color:#444;font-weight:normal;font-style:normal;left:1549.0px;transform-origin:0 50%;transform:scaleX(0.901);">Sum: 2021</span>
<div style="left:1620px;top:1018px;width:39px;height:22px;background:#c8c8c8;"></div>
<svg style="left:1633px;top:1022px" width="14" height="13" viewBox="0 0 14 13"><path d="M0.5 0.5H13.5V12.5H0.5ZM0.5 4.5H13.5M0.5 8.5H13.5M4.5 0.5V12.5M9.5 0.5V12.5" fill="none" stroke="#666"/></svg>
<svg style="left:1673px;top:1022px" width="14" height="13" viewBox="0 0 14 13"><rect x="0.5" y="0.5" width="13" height="12" fill="none" stroke="#666"/><rect x="3.5" y="3.5" width="7" height="6" fill="none" stroke="#666"/><path d="M5 5.5H9M5 7.5H9" stroke="#666"/></svg>
<svg style="left:1713px;top:1022px" width="14" height="13" viewBox="0 0 14 13"><path d="M0.5 0.5H13.5V12.5H0.5Z" fill="none" stroke="#666"/><path d="M4.5 0.5V8.5H9.5V0.5M0.5 8.5H13.5" fill="none" stroke="#666"/></svg>
<div style="left:1745px;top:1028px;width:9px;height:1px;background:#555;"></div>
<div style="left:1760px;top:1028px;width:99px;height:1px;background:#a6a6a6;"></div>
<div style="left:1806px;top:1022px;width:5px;height:13px;background:#666;"></div>
<div style="left:1863px;top:1028px;width:9px;height:1px;background:#555;"></div>
<div style="left:1867px;top:1024px;width:1px;height:9px;background:#555;"></div>
<span class="t" style="top:1021.0px;font-size:11.7px;line-height:15px;color:#444;font-weight:normal;font-style:normal;left:1885.5px;transform-origin:0 50%;transform:scaleX(0.886);">100%</span>
<svg style="left:16px;top:1052px" width="17" height="16" viewBox="0 0 17 16"><path d="M0 2.3L6.7 1.3V7.6H0ZM7.7 1.2L16.5 0V7.6H7.7ZM0 8.5H6.7V14.8L0 13.8ZM7.7 8.5H16.5V16L7.7 14.9Z" fill="#111"/></svg>
<div style="left:49px;top:1040px;width:287px;height:40px;background:#fff;"></div>
<div style="left:49px;top:1040px;width:287px;height:1px;background:#cfcaca;"></div>
<svg style="left:60px;top:1051px" width="17" height="17" viewBox="0 0 17 17"><circle cx="10.5" cy="6.5" r="5.3" fill="none" stroke="#222" stroke-width="1.4"/><path d="M6.7 10.3L0.8 16.2" stroke="#222" stroke-width="1.5"/></svg>
<span class="t" style="top:1051.7px;font-size:14.6px;line-height:19px;color:#3a3a3a;font-weight:normal;font-style:normal;left:88.0px;transform-origin:0 50%;transform:scaleX(0.992);">Type here to search</span>
<svg style="left:260px;top:1040px" width="76" height="40" viewBox="0 0 76 40"><defs><linearGradient id="sand" x1="0" y1="0" x2="0" y2="1"><stop offset="0" stop-color="#ecd2a6"/><stop offset="1" stop-color="#d6ae76"/></linearGradient></defs>
<path d="M2 40C8 34.5 20 32 38 31.5C56 31 70 32 76 33.5V40Z" fill="url(#sand)"/>
<path d="M16 1L18.5 3L32.5 11L51 12.5C55 13 56.5 17 55 20.5L53.8 36.5H51.2L50.2 27L47.8 36.5H45.5L45 25.5C40 27.3 34 27 31.5 25.3L31 36.5H28.8L28.4 27L27.4 36.5H25.3L25.5 23C23 21.5 22 19.5 22 17.5L14.5 14.5L10 17C7.8 17.3 6.8 15.5 7.6 14L12.8 4Z" fill="#dddbe8"/>
<path d="M13 6L18 12L22 17.5L26 23L31 25L45 25.5L50 24L52 18L45 17L35 17L27 14L20 8Z" fill="#efeef5"/>
<path d="M16.3 1.2L18.7 3.2L32.5 11L35 11.3" fill="none" stroke="#37324f" stroke-width="2.6" stroke-linejoin="round"/>
<path d="M17 5.5L20 11M20 6.5L23.5 14M23 8L26 17.5M26 10L28.5 21M29.5 11.5L31 23.5M33.5 12L34 25.5M37.5 12L37 26M41.5 12.3L40 26M45.5 12.5L43.5 25.5M49 12.8L47 23M52.5 14L50 20.5M13.5 5.5L15.5 9.5" stroke="#37324f" stroke-width="1.5" fill="none"/>
<path d="M26.5 27L26.2 32M30 27.5L29.8 32M46.5 27L46.5 32M52.3 24L52.2 31" stroke="#8f8ba6" stroke-width="1.2"/>
<path d="M53.5 14C57 17 56.5 23 60 29.5" stroke="#37324f" stroke-width="2.4" fill="none" stroke-linecap="round"/>
<path d="M7.4 14.5C7.5 16.8 9.5 17.4 11.5 16.3" stroke="#37324f" stroke-width="1.8" fill="none"/><circle cx="13.8" cy="8.3" r="0.9" fill="#1c1a2a"/>
<path d="M25.3 36.7H27.6M28.8 36.7H31.2M45.5 36.7H48M51.2 36.7H54" stroke="#4a4652" stroke-width="1.3"/></svg>
<div style="left:343px;top:1078px;width:40px;height:2px;background:#1474cf;"></div>
<div style="left:392px;top:1078px;width:40px;height:2px;background:#1474cf;"></div>
<div style="left:441px;top:1078px;width:40px;height:2px;background:#1474cf;"></div>
<div style="left:490px;top:1078px;width:40px;height:2px;background:#1474cf;"></div>
<div style="left:588px;top:1078px;width:40px;height:2px;background:#1474cf;"></div>
<div style="left:637px;top:1078px;width:40px;height:2px;background:#1474cf;"></div>
<div style="left:686px;top:1078px;width:40px;height:2px;background:#1474cf;"></div>
<div style="left:535px;top:1040px;width:45px;height:40px;background:#f1efef;"></div>
<div style="left:535px;top:1078px;width:45px;height:2px;background:#1474cf;"></div>
<div style="left:580px;top:1040px;width:1px;height:40px;background:#cdc8c8;"></div>
<div style="left:581px;top:1040px;width:2px;height:38px;background:#e9e6e6;"></div>
<svg style="left:351px;top:1047px" width="26" height="26" viewBox="0 0 26 26"><defs><linearGradient id="eg1" x1="0.1" y1="0" x2="0.6" y2="1"><stop offset="0" stop-color="#36c3ef"/><stop offset="1" stop-color="#0b55a3"/></linearGradient>
<linearGradient id="eg2" x1="0" y1="0.3" x2="1" y2="0.5"><stop offset="0" stop-color="#22a9e0"/><stop offset="0.6" stop-color="#3fd08c"/><stop offset="1" stop-color="#7be26a"/></linearGradient></defs>
<circle cx="13" cy="13" r="12.3" fill="url(#eg1)"/>
<path d="M1.2 10C3.5 2.5 11 -0.5 17.5 1.5C23.5 3.5 26.5 9 25 14C24 17.5 20.5 18.8 17.5 18C19.5 16 19 12.5 16 10.8C11 8 5 10.5 3.5 16.5C1.5 14.5 0.7 12 1.2 10Z" fill="url(#eg2)"/>
<path d="M10.8 13.2C12 11 15.5 11 17 13C18 14.6 17.3 16.6 15.6 17.6C17.6 19.6 21.3 19.2 24 17C22.3 22.5 16.5 26 10.5 23.6C7.8 20.5 8.2 15.8 10.8 13.2Z" fill="#0c4c99" opacity="0.9"/>
<path d="M12.5 13.8C13.5 12.3 15.6 12.5 16.3 14C16.9 15.3 16.2 16.7 15 17.3C16.5 19 20.5 19.3 23.8 17.2C24.6 15.8 25 14.5 25 13.5C23 16 19 16.8 17.8 15.5C18.3 13 15.5 10.8 12.5 13.8Z" fill="#e6f3fb"/></svg>
<svg style="left:399px;top:1047px" width="28" height="28" viewBox="0 0 28 28"><circle cx="12.5" cy="12.5" r="12" fill="#fff"/>
<path d="M12.5 0.5A12 12 0 0 1 22.9 6.5H12.5A6 6 0 0 0 7.3 9.5L2.1 6.5A12 12 0 0 1 12.5 0.5Z" fill="#ea4335"/>
<path d="M22.9 6.5A12 12 0 0 1 12.5 24.5L17.7 15.5A6 6 0 0 0 17.7 9.5L22.9 6.5Z" fill="#fbbc04"/><path d="M12.5 6.5H22.9A12 12 0 0 1 24.2 10H17.8Z" fill="#fbbc04"/>
<path d="M2.1 6.5A12 12 0 0 0 12.5 24.5L17.7 15.5A6 6 0 0 1 7.3 15.5Z" fill="#34a853"/>
<circle cx="12.5" cy="12.5" r="5.6" fill="#fff"/><circle cx="12.5" cy="12.5" r="4.5" fill="#4285f4"/>
<circle cx="19.5" cy="19.5" r="7.3" fill="#8a55d6" stroke="#e0dcdb" stroke-width="0.8"/><path d="M17 22.5L19.5 16L22 22.5M18 20.5H21" fill="none" stroke="#efe6ff" stroke-width="1.2"/></svg>
<svg style="left:448px;top:1047px" width="26" height="26" viewBox="0 0 26 26"><defs><radialGradient id="ff1" cx="0.65" cy="0.2" r="0.9"><stop offset="0" stop-color="#ffe14d"/><stop offset="0.45" stop-color="#ff8a16"/><stop offset="0.8" stop-color="#f0324f"/><stop offset="1" stop-color="#c0239b"/></radialGradient></defs>
<path d="M13 1.5C15.5 3 17 4 19 4.5C22 6.5 24.8 10.5 24.3 15C23.5 21 18.5 25 12.8 25C6.5 25 1.5 20 1.5 13.8C1.5 10 3.2 7.3 5 5.5C5.2 7 5.8 8 6.8 8.7C7.5 5.5 9.8 3 13 1.5Z" fill="url(#ff1)"/>
<circle cx="12.5" cy="14" r="5.6" fill="#7a3fe0"/><path d="M8 12C10 9.5 14 9.3 16.5 11.5C14.5 11.3 13 12 12.5 13.5C11 13 9 12.5 8 12Z" fill="#ffb347"/>
<path d="M6.5 14C7 18.5 11 21 15 20C18.5 19 20 16 19.5 13C21.5 16 20.5 21 16.5 23C11 25 5.5 20.5 6.5 14Z" fill="#ff7a18"/></svg>
<svg style="left:498px;top:1049px" width="23" height="21" viewBox="0 0 23 21"><path d="M1.5 2.5H9L10.5 4.5H21.5V8H1.5Z" fill="#e6b73a"/><rect x="3" y="0.8" width="6" height="1.8" fill="#d9a62b"/>
<rect x="0.5" y="5.5" width="22" height="14.5" rx="0.8" fill="#f8d775"/><path d="M0.5 12H22.5V19.2A0.8 0.8 0 0 1 21.7 20H1.3A0.8 0.8 0 0 1 0.5 19.2Z" fill="#f2c84e"/>
<path d="M4.5 20V13.2H18.5V20H14.5V16.3H8.5V20Z" fill="#2f7fd6"/><rect x="4.5" y="13.2" width="14" height="1.6" fill="#1f5fae"/></svg>
<svg style="left:547px;top:1049px" width="24" height="21" viewBox="0 0 24 21"><rect x="6" y="0" width="18" height="21" rx="1.5" fill="#21a366"/><rect x="6" y="0" width="9" height="5.3" fill="#21a366"/><rect x="15" y="0" width="9" height="5.3" rx="1" fill="#33c481"/>
<rect x="6" y="5.3" width="9" height="5.2" fill="#107c41"/><rect x="15" y="5.3" width="9" height="5.2" fill="#21a366"/><rect x="6" y="10.5" width="9" height="5.2" fill="#185c37"/><rect x="15" y="10.5" width="9" height="5.2" fill="#107c41"/><rect x="6" y="15.7" width="18" height="5.3" rx="1" fill="#185c37"/>
<rect x="0" y="4.5" width="12" height="12" rx="1.2" fill="#107c41"/><path d="M3.2 7.2L8.8 13.8M8.8 7.2L3.2 13.8" stroke="#fff" stroke-width="1.7"/></svg>
<svg style="left:597px;top:1049px" width="22" height="21" viewBox="0 0 22 21"><rect x="0" y="0" width="22" height="21" rx="3.5" fill="#c3150f"/>
<path d="M4.5 16.5C6 13.5 9.5 12 13 12.3C15.5 12.5 17.5 13.3 17.5 14.2C17.3 15 15 14.5 13 12.8C10.5 10.5 9.5 7 10.5 5C11.3 4 12.2 5 11.8 7.5C11.2 11 8.5 15.5 5.5 17.2C4.8 17.5 4.2 17.2 4.5 16.5Z" fill="none" stroke="#fff" stroke-width="1.3"/></svg>
<svg style="left:645px;top:1049px" width="24" height="21" viewBox="0 0 24 21"><rect x="6" y="0" width="18" height="21" rx="1.5" fill="#2b7cd3"/><rect x="6" y="0" width="18" height="5.3" rx="1" fill="#41a5ee"/><rect x="6" y="5.3" width="18" height="5.2" fill="#2b7cd3"/><rect x="6" y="10.5" width="18" height="5.2" fill="#185abd"/><rect x="6" y="15.7" width="18" height="5.3" rx="1" fill="#103f91"/>
<rect x="0" y="4.5" width="12" height="12" rx="1.2" fill="#185abd"/><path d="M2.3 7.3L4.2 13.7L6 8.5L7.8 13.7L9.7 7.3" fill="none" stroke="#fff" stroke-width="1.4"/></svg>
<svg style="left:697px;top:1051px" width="18" height="18" viewBox="0 0 18 18"><rect x="7.2" y="-0.2" width="3.6" height="4.6" fill="#3a3a3a" transform="rotate(0 9 9)"/><rect x="7.2" y="-0.2" width="3.6" height="4.6" fill="#3a3a3a" transform="rotate(45 9 9)"/><rect x="7.2" y="-0.2" width="3.6" height="4.6" fill="#3a3a3a" transform="rotate(90 9 9)"/><rect x="7.2" y="-0.2" width="3.6" height="4.6" fill="#3a3a3a" transform="rotate(135 9 9)"/><rect x="7.2" y="-0.2" width="3.6" height="4.6" fill="#3a3a3a" transform="rotate(180 9 9)"/><rect x="7.2" y="-0.2" width="3.6" height="4.6" fill="#3a3a3a" transform="rotate(225 9 9)"/><rect x="7.2" y="-0.2" width="3.6" height="4.6" fill="#3a3a3a" transform="rotate(270 9 9)"/><rect x="7.2" y="-0.2" width="3.6" height="4.6" fill="#3a3a3a" transform="rotate(315 9 9)"/><circle cx="9" cy="9" r="5.2" fill="none" stroke="#3a3a3a" stroke-width="2.9"/></svg>
<svg style="left:1513px;top:1047px" width="22" height="26" viewBox="0 0 22 26"><path d="M3 6C3 2.5 8 0.5 19 1L19 5.5C10 5 5 6.5 3 8.5Z" fill="#f5b335"/><path d="M3 11C3 7.5 8 5.5 19 6L19 10.5C10 10 5 11.5 3 13.5Z" fill="#f2a623"/><path d="M3 16C3 12.5 8 10.5 19 11L19 15.5C10 15 5 16.5 3 18.5Z" fill="#ee9a1c"/><path d="M3 21C3 17.5 8 15.5 19 16L19 20.5C10 20 5 21.5 3 23.5Z" fill="#e88f16"/></svg>
<span class="t" style="top:1050.5px;font-size:14.6px;line-height:19px;color:#111;font-weight:normal;font-style:normal;left:1544.5px;transform-origin:0 50%;transform:scaleX(0.922);">Prakiraan kualitas ud...</span>
<svg style="left:1706.5px;top:1056.0px" width="13" height="8" viewBox="0 0 13 8"><path d="M0.5 7.5L6.5 0.5L12.5 7.5" fill="none" stroke="#222" stroke-width="1.5"/></svg>
<svg style="left:1731px;top:1051px" width="14" height="17" viewBox="0 0 14 17"><rect x="1" y="5" width="8" height="7" rx="1.5" fill="none" stroke="#222" stroke-width="1.2"/><path d="M9 8L12.5 6V11L9 9.3" fill="none" stroke="#222" stroke-width="1.1"/><path d="M1.5 3C3 0.8 7 0.8 8.5 3M1.5 14C3 16.2 7 16.2 8.5 14" fill="none" stroke="#222" stroke-width="1.1"/></svg>
<svg style="left:1752px;top:1054px" width="18" height="14" viewBox="0 0 18 14"><rect x="3.5" y="0.6" width="13.5" height="9" fill="none" stroke="#222" stroke-width="1.2"/><path d="M10.2 9.6V12.5M6.5 13H14" stroke="#222" stroke-width="1.2"/><rect x="0.6" y="2.6" width="5" height="4" fill="#e0dcdb" stroke="#222" stroke-width="1.1"/><path d="M3 6.6V13" stroke="#222" stroke-width="1.1"/></svg>
<svg style="left:1777px;top:1053px" width="17" height="15" viewBox="0 0 17 15"><path d="M0.7 5H3.5L7.5 1V14L3.5 10H0.7Z" fill="none" stroke="#222" stroke-width="1.2"/><path d="M9.8 5C11 6.5 11 8.5 9.8 10" fill="none" stroke="#222" stroke-width="1.1"/><path d="M12 3.2C14 5.5 14 9.5 12 11.8" fill="none" stroke="#777" stroke-width="1"/><path d="M14.2 1.5C17 5 17 10 14.2 13.5" fill="none" stroke="#aaa" stroke-width="1"/></svg>
<span class="t" style="top:1043.0px;font-size:12px;line-height:16px;color:#111;font-weight:normal;font-style:normal;left:1331.8px;width:1000px;text-align:center;transform-origin:50% 50%;transform:scaleX(0.899);">14:23</span>
<span class="t" style="top:1060.8px;font-size:12px;line-height:16px;color:#111;font-weight:normal;font-style:normal;left:1332.0px;width:1000px;text-align:center;transform-origin:50% 50%;transform:scaleX(0.966);">31/01/2026</span>
<svg style="left:1879px;top:1052px" width="25" height="24" viewBox="0 0 25 24"><path d="M0.5 0.5H16.5V11.5H5.5L2.5 14.5V11.5H0.5Z" fill="#111"/><path d="M3 3.5H14M3 6H14M3 8.5H11" stroke="#e0dcdb" stroke-width="1"/><circle cx="15.5" cy="15.5" r="7.3" fill="#e0dcdb" stroke="#555" stroke-width="1"/><text x="15.5" y="19.3" font-family="Liberation Sans" font-size="10.5" text-anchor="middle" fill="#111">3</text></svg>
<div style="left:1915px;top:1040px;width:1px;height:40px;background:#bdb8b8;"></div>
</body></html>
